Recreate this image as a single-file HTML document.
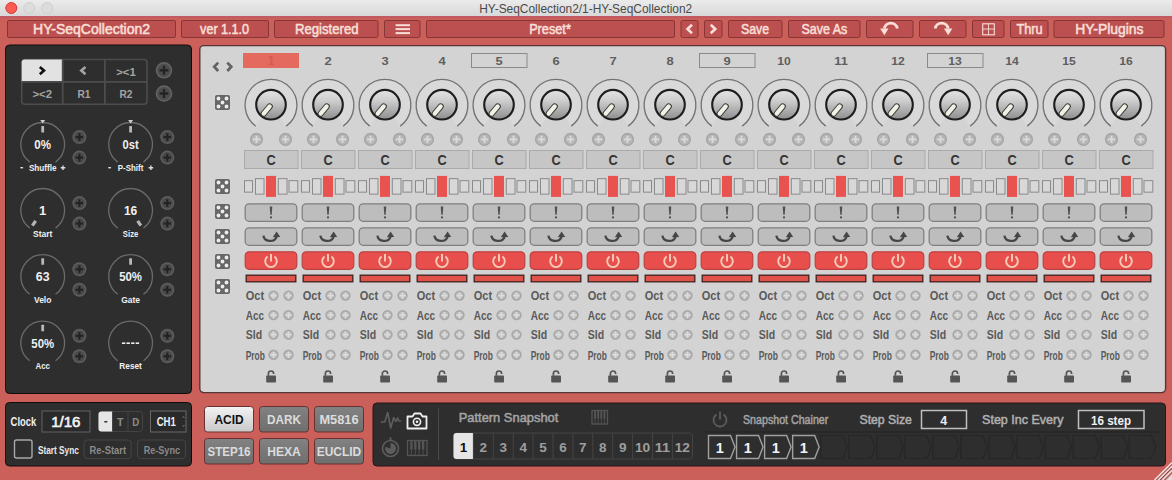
<!DOCTYPE html>
<html><head><meta charset="utf-8"><title>HY-SeqCollection2</title>
<style>html,body{margin:0;padding:0;width:1172px;height:480px;overflow:hidden;background:#cb5f5a;font-family:"Liberation Sans", sans-serif;}
svg text{font-family:"Liberation Sans", sans-serif;}</style></head>
<body><svg width="1172" height="480" viewBox="0 0 1172 480" style="display:block;font-family:"Liberation Sans", sans-serif"><defs>
<linearGradient id="tb" x1="0" y1="0" x2="0" y2="1"><stop offset="0" stop-color="#ebebeb"/><stop offset="1" stop-color="#d8d8d8"/></linearGradient>
<linearGradient id="kn" x1="0" y1="0" x2="0" y2="1"><stop offset="0" stop-color="#e4e4e4"/><stop offset="0.35" stop-color="#cfcfcf"/><stop offset="1" stop-color="#8e8e8e"/></linearGradient>
<linearGradient id="acid" x1="0" y1="0" x2="0" y2="1"><stop offset="0" stop-color="#f3f3f3"/><stop offset="1" stop-color="#c8c8c8"/></linearGradient>
<linearGradient id="gbtn" x1="0" y1="0" x2="0" y2="1"><stop offset="0" stop-color="#828282"/><stop offset="1" stop-color="#6e6e6e"/></linearGradient>
<g id="dice"><rect x="0" y="0" width="15" height="15" rx="2" fill="#676767"/>
<circle cx="3.5" cy="3.5" r="1.9" fill="#ececec"/><circle cx="11.5" cy="3.5" r="1.9" fill="#ececec"/><circle cx="7.5" cy="7.5" r="1.9" fill="#ececec"/><circle cx="3.5" cy="11.5" r="1.9" fill="#ececec"/><circle cx="11.5" cy="11.5" r="1.9" fill="#ececec"/></g>
<g id="plusL"><circle cx="0" cy="0" r="5.9" fill="#b6b6b6" stroke="#a4a4a4" stroke-width="1.3"/><rect x="-3.6" y="-0.95" width="7.2" height="1.9" fill="#dadada"/><rect x="-0.95" y="-3.6" width="1.9" height="7.2" fill="#dadada"/></g>
<g id="plusS"><circle cx="0" cy="0" r="4.3" fill="#bfbfbf" stroke="#a8a8a8" stroke-width="1.8"/><rect x="-3.2" y="-0.85" width="6.4" height="1.7" fill="#dcdcdc"/><rect x="-0.85" y="-3.2" width="1.7" height="6.4" fill="#dcdcdc"/></g>
<g id="plusD"><circle cx="0" cy="0" r="8.3" fill="#626262"/><circle cx="0" cy="0" r="6.6" fill="#4c4c4c"/><rect x="-4.4" y="-1.15" width="8.8" height="2.3" fill="#232323"/><rect x="-1.15" y="-4.4" width="2.3" height="8.8" fill="#232323"/></g>
<g id="plusD2"><circle cx="0" cy="0" r="7" fill="#5e5e5e"/><circle cx="0" cy="0" r="5.5" fill="#4a4a4a"/><rect x="-3.8" y="-1.05" width="7.6" height="2.1" fill="#232323"/><rect x="-1.05" y="-3.8" width="2.1" height="7.6" fill="#232323"/></g>
</defs>
<rect x="0.00" y="0.00" width="1172.00" height="16.00" rx="0" fill="url(#tb)" stroke="none" stroke-width="1" />
<circle cx="11.30" cy="8.00" r="5.5" fill="#fd5a50" stroke="#c9403a" stroke-width="1" />
<circle cx="29.30" cy="8.00" r="5.5" fill="#dcdcdc" stroke="#cdcdcd" stroke-width="0.9" />
<circle cx="47.20" cy="8.00" r="5.5" fill="#dcdcdc" stroke="#cdcdcd" stroke-width="0.9" />
<text x="585.75" y="12.60" font-size="12.5" fill="#4a4a4a" font-weight="normal" text-anchor="middle" textLength="213" lengthAdjust="spacingAndGlyphs" >HY-SeqCollection2/1-HY-SeqCollection2</text>
<rect x="0.00" y="16.00" width="1172.00" height="464.00" rx="0" fill="#cb5f5a" stroke="none" stroke-width="1" />
<rect x="0.00" y="16.00" width="1172.00" height="2.00" rx="0" fill="#c25a64" stroke="none" stroke-width="1" />
<rect x="7.50" y="20.50" width="168.00" height="17.00" rx="1.5" fill="#bc5051" stroke="#883535" stroke-width="1" />
<text x="91.60" y="34.00" font-size="14" fill="#f8ded6" font-weight="normal" text-anchor="middle" textLength="117" lengthAdjust="spacingAndGlyphs" stroke="#f8ded6" stroke-width="0.55">HY-SeqCollection2</text>
<rect x="181.50" y="20.50" width="87.00" height="17.00" rx="1.5" fill="#bc5051" stroke="#883535" stroke-width="1" />
<text x="224.60" y="34.00" font-size="14" fill="#f8ded6" font-weight="normal" text-anchor="middle" textLength="49" lengthAdjust="spacingAndGlyphs" stroke="#f8ded6" stroke-width="0.55">ver 1.1.0</text>
<rect x="274.50" y="20.50" width="103.50" height="17.00" rx="1.5" fill="#bc5051" stroke="#883535" stroke-width="1" />
<text x="326.75" y="34.00" font-size="14" fill="#f8ded6" font-weight="normal" text-anchor="middle" textLength="63.5" lengthAdjust="spacingAndGlyphs" stroke="#f8ded6" stroke-width="0.55">Registered</text>
<rect x="384.50" y="20.50" width="35.50" height="17.00" rx="1.5" fill="#bc5051" stroke="#883535" stroke-width="1" />
<rect x="395.60" y="24.20" width="14.40" height="2.00" rx="0" fill="#f8ded6" stroke="none" stroke-width="1" />
<rect x="395.60" y="28.10" width="14.40" height="2.00" rx="0" fill="#f8ded6" stroke="none" stroke-width="1" />
<rect x="395.60" y="32.10" width="14.40" height="2.00" rx="0" fill="#f8ded6" stroke="none" stroke-width="1" />
<rect x="426.50" y="20.50" width="248.00" height="17.00" rx="1.5" fill="#bc5051" stroke="#883535" stroke-width="1" />
<text x="550.00" y="34.00" font-size="14" fill="#f8ded6" font-weight="normal" text-anchor="middle" textLength="41.75" lengthAdjust="spacingAndGlyphs" stroke="#f8ded6" stroke-width="0.55">Preset*</text>
<rect x="681.00" y="20.50" width="17.00" height="17.00" rx="1.5" fill="#bc5051" stroke="#883535" stroke-width="1" />
<path d="M692.0,24.8 L687.5,29 L692.0,33.2" fill="none" stroke="#f8ded6" stroke-width="2.6"/>
<rect x="704.50" y="20.50" width="17.50" height="17.00" rx="1.5" fill="#bc5051" stroke="#883535" stroke-width="1" />
<path d="M710.75,24.8 L715.25,29 L710.75,33.2" fill="none" stroke="#f8ded6" stroke-width="2.6"/>
<rect x="728.50" y="20.50" width="53.50" height="17.00" rx="1.5" fill="#bc5051" stroke="#883535" stroke-width="1" />
<text x="755.00" y="34.00" font-size="14" fill="#f8ded6" font-weight="normal" text-anchor="middle" textLength="28" lengthAdjust="spacingAndGlyphs" stroke="#f8ded6" stroke-width="0.55">Save</text>
<rect x="788.50" y="20.50" width="71.50" height="17.00" rx="1.5" fill="#bc5051" stroke="#883535" stroke-width="1" />
<text x="824.40" y="34.00" font-size="14" fill="#f8ded6" font-weight="normal" text-anchor="middle" textLength="45.75" lengthAdjust="spacingAndGlyphs" stroke="#f8ded6" stroke-width="0.55">Save As</text>
<rect x="866.50" y="20.50" width="46.50" height="17.00" rx="1.5" fill="#bc5051" stroke="#883535" stroke-width="1" />
<path d="M897.35,28.6 A6.6,6.6 0 0 0 884.35,28.6" fill="none" stroke="#f8ded6" stroke-width="2.8"/>
<path d="M880.15,28.4 L888.55,28.4 L884.35,35.3 Z" fill="#f8ded6"/>
<rect x="919.50" y="20.50" width="46.50" height="17.00" rx="1.5" fill="#bc5051" stroke="#883535" stroke-width="1" />
<path d="M935.15,28.6 A6.6,6.6 0 0 1 948.15,28.6" fill="none" stroke="#f8ded6" stroke-width="2.8"/>
<path d="M952.35,28.4 L943.95,28.4 L948.15,35.3 Z" fill="#f8ded6"/>
<rect x="972.50" y="20.50" width="31.50" height="17.00" rx="1.5" fill="#bc5051" stroke="#883535" stroke-width="1" />
<rect x="982.70" y="23.80" width="11.60" height="11.00" rx="0" fill="none" stroke="#f8ded6" stroke-width="1.1" />
<line x1="988.5" y1="23.8" x2="988.5" y2="34.8" stroke="#f8ded6" stroke-width="0.9"/>
<line x1="982.7" y1="29" x2="994.3" y2="29" stroke="#f8ded6" stroke-width="0.9"/>
<rect x="1010.50" y="20.50" width="37.50" height="17.00" rx="1.5" fill="#bc5051" stroke="#883535" stroke-width="1" />
<text x="1029.60" y="34.00" font-size="14" fill="#f8ded6" font-weight="normal" text-anchor="middle" textLength="26.25" lengthAdjust="spacingAndGlyphs" stroke="#f8ded6" stroke-width="0.55">Thru</text>
<rect x="1054.00" y="20.50" width="110.00" height="17.00" rx="1.5" fill="#bc5051" stroke="#883535" stroke-width="1" />
<text x="1109.40" y="34.00" font-size="14" fill="#f8ded6" font-weight="normal" text-anchor="middle" textLength="68.25" lengthAdjust="spacingAndGlyphs" stroke="#f8ded6" stroke-width="0.55">HY-Plugins</text>
<rect x="5.50" y="45.00" width="186.00" height="348.50" rx="4" fill="#2e2e2e" stroke="#140c0c" stroke-width="1" />
<rect x="21.70" y="59.50" width="125.30" height="44.70" rx="3" fill="#2e2e2e" stroke="#4c4c4c" stroke-width="1.6" />
<path d="M24.7,59.5 H62.7 V81.8 H21.7 V62.5 A3,3 0 0 1 24.7,59.5 Z" fill="#e2e2e2"/>
<line x1="62.7" y1="59.5" x2="62.7" y2="104.2" stroke="#4c4c4c" stroke-width="1.8"/>
<line x1="104.9" y1="59.5" x2="104.9" y2="104.2" stroke="#4c4c4c" stroke-width="1.8"/>
<line x1="21.7" y1="81.8" x2="147" y2="81.8" stroke="#4c4c4c" stroke-width="1.8"/>
<path d="M39.8,67 L44,70.6 L39.8,74.2" fill="none" stroke="#111" stroke-width="2.6"/>
<path d="M85.5,67 L81.3,70.6 L85.5,74.2" fill="none" stroke="#a4a4a4" stroke-width="2.6"/>
<text x="126.00" y="75.60" font-size="11" fill="#a4a4a4" font-weight="bold" text-anchor="middle" textLength="19.5" lengthAdjust="spacingAndGlyphs" >&gt;&lt;1</text>
<text x="42.20" y="98.00" font-size="11" fill="#a4a4a4" font-weight="bold" text-anchor="middle" textLength="19.5" lengthAdjust="spacingAndGlyphs" >&gt;&lt;2</text>
<text x="84.00" y="98.00" font-size="11" fill="#a4a4a4" font-weight="bold" text-anchor="middle" textLength="13" lengthAdjust="spacingAndGlyphs" >R1</text>
<text x="126.00" y="98.00" font-size="11" fill="#a4a4a4" font-weight="bold" text-anchor="middle" textLength="13" lengthAdjust="spacingAndGlyphs" >R2</text>
<use href="#plusD" x="164" y="70.3"/>
<use href="#plusD" x="164" y="93.5"/>
<path d="M29.83,162.12 A21.9,21.9 0 1 1 55.57,162.12" fill="none" stroke="#6a6a6a" stroke-width="1.3"/>
<rect x="41.30" y="126.00" width="2.80" height="6.50" rx="0.5" fill="#b8b8b8" stroke="none" stroke-width="1" />
<path d="M40.2,119.9 L45.2,119.9 L42.7,123.4 Z" fill="#cfcfcf"/>
<text x="42.70" y="149.00" font-size="12.6" fill="#f0f0f0" font-weight="bold" text-anchor="middle" textLength="16.7" lengthAdjust="spacingAndGlyphs" >0%</text>
<text x="42.70" y="170.80" font-size="9.2" fill="#f0f0f0" font-weight="bold" text-anchor="middle" textLength="27.6" lengthAdjust="spacingAndGlyphs" >Shuffle</text>
<rect x="20.40" y="167.00" width="2.70" height="1.40" rx="0" fill="#dddddd" stroke="none" stroke-width="1" />
<path d="M60.7,167.70000000000002 h4.6 M63.0,165.4 v4.6" stroke="#dddddd" stroke-width="1.4"/>
<use href="#plusD2" x="79.4" y="137.1"/>
<use href="#plusD2" x="79.4" y="157.6"/>
<path d="M117.73,162.12 A21.9,21.9 0 1 1 143.47,162.12" fill="none" stroke="#6a6a6a" stroke-width="1.3"/>
<rect x="129.20" y="126.00" width="2.80" height="6.50" rx="0.5" fill="#b8b8b8" stroke="none" stroke-width="1" />
<path d="M128.1,119.9 L133.1,119.9 L130.6,123.4 Z" fill="#cfcfcf"/>
<text x="130.60" y="149.00" font-size="12.6" fill="#f0f0f0" font-weight="bold" text-anchor="middle" textLength="16.1" lengthAdjust="spacingAndGlyphs" >0st</text>
<text x="130.60" y="170.80" font-size="9.2" fill="#f0f0f0" font-weight="bold" text-anchor="middle" textLength="25.5" lengthAdjust="spacingAndGlyphs" >P-Shift</text>
<rect x="108.30" y="167.00" width="2.70" height="1.40" rx="0" fill="#dddddd" stroke="none" stroke-width="1" />
<path d="M148.6,167.70000000000002 h4.6 M150.9,165.4 v4.6" stroke="#dddddd" stroke-width="1.4"/>
<use href="#plusD2" x="167.3" y="137.1"/>
<use href="#plusD2" x="167.3" y="157.6"/>
<path d="M29.83,228.12 A21.9,21.9 0 1 1 55.57,228.12" fill="none" stroke="#6a6a6a" stroke-width="1.3"/>
<line x1="35.65" y1="220.85" x2="32.41" y2="225.65" stroke="#b4b4b4" stroke-width="3.2"/>
<text x="42.70" y="215.00" font-size="12.6" fill="#f0f0f0" font-weight="bold" text-anchor="middle" textLength="7.3" lengthAdjust="spacingAndGlyphs" >1</text>
<text x="42.70" y="236.80" font-size="9.2" fill="#f0f0f0" font-weight="bold" text-anchor="middle" textLength="19.3" lengthAdjust="spacingAndGlyphs" >Start</text>
<use href="#plusD2" x="79.4" y="203.1"/>
<use href="#plusD2" x="79.4" y="223.6"/>
<path d="M117.73,228.12 A21.9,21.9 0 1 1 143.47,228.12" fill="none" stroke="#6a6a6a" stroke-width="1.3"/>
<line x1="137.65" y1="220.85" x2="140.89" y2="225.65" stroke="#b4b4b4" stroke-width="3.2"/>
<text x="130.60" y="215.00" font-size="12.6" fill="#f0f0f0" font-weight="bold" text-anchor="middle" textLength="13.4" lengthAdjust="spacingAndGlyphs" >16</text>
<text x="130.60" y="236.80" font-size="9.2" fill="#f0f0f0" font-weight="bold" text-anchor="middle" textLength="15.5" lengthAdjust="spacingAndGlyphs" >Size</text>
<use href="#plusD2" x="167.3" y="203.1"/>
<use href="#plusD2" x="167.3" y="223.6"/>
<path d="M29.83,294.32 A21.9,21.9 0 1 1 55.57,294.32" fill="none" stroke="#6a6a6a" stroke-width="1.3"/>
<rect x="41.30" y="258.20" width="2.80" height="6.50" rx="0.5" fill="#b8b8b8" stroke="none" stroke-width="1" />
<text x="42.70" y="281.20" font-size="12.6" fill="#f0f0f0" font-weight="bold" text-anchor="middle" textLength="13.75" lengthAdjust="spacingAndGlyphs" >63</text>
<text x="42.70" y="303.00" font-size="9.2" fill="#f0f0f0" font-weight="bold" text-anchor="middle" textLength="17.5" lengthAdjust="spacingAndGlyphs" >Velo</text>
<use href="#plusD2" x="79.4" y="269.3"/>
<use href="#plusD2" x="79.4" y="289.8"/>
<path d="M117.73,294.32 A21.9,21.9 0 1 1 143.47,294.32" fill="none" stroke="#6a6a6a" stroke-width="1.3"/>
<rect x="129.20" y="258.20" width="2.80" height="6.50" rx="0.5" fill="#b8b8b8" stroke="none" stroke-width="1" />
<text x="130.60" y="281.20" font-size="12.6" fill="#f0f0f0" font-weight="bold" text-anchor="middle" textLength="22.8" lengthAdjust="spacingAndGlyphs" >50%</text>
<text x="130.60" y="303.00" font-size="9.2" fill="#f0f0f0" font-weight="bold" text-anchor="middle" textLength="18.75" lengthAdjust="spacingAndGlyphs" >Gate</text>
<use href="#plusD2" x="167.3" y="269.3"/>
<use href="#plusD2" x="167.3" y="289.8"/>
<path d="M29.83,360.82 A21.9,21.9 0 1 1 55.57,360.82" fill="none" stroke="#6a6a6a" stroke-width="1.3"/>
<rect x="41.30" y="324.70" width="2.80" height="6.50" rx="0.5" fill="#b8b8b8" stroke="none" stroke-width="1" />
<text x="42.70" y="347.70" font-size="12.6" fill="#f0f0f0" font-weight="bold" text-anchor="middle" textLength="22.8" lengthAdjust="spacingAndGlyphs" >50%</text>
<text x="42.70" y="368.80" font-size="9.2" fill="#f0f0f0" font-weight="bold" text-anchor="middle" textLength="14.5" lengthAdjust="spacingAndGlyphs" >Acc</text>
<use href="#plusD2" x="79.4" y="335.8"/>
<use href="#plusD2" x="79.4" y="356.3"/>
<path d="M117.73,360.82 A21.9,21.9 0 1 1 143.47,360.82" fill="none" stroke="#6a6a6a" stroke-width="1.3"/>
<rect x="121.90" y="342.40" width="3.40" height="1.60" rx="0" fill="#eeeeee" stroke="none" stroke-width="1" />
<rect x="126.50" y="342.40" width="3.40" height="1.60" rx="0" fill="#eeeeee" stroke="none" stroke-width="1" />
<rect x="131.10" y="342.40" width="3.40" height="1.60" rx="0" fill="#eeeeee" stroke="none" stroke-width="1" />
<rect x="135.70" y="342.40" width="3.40" height="1.60" rx="0" fill="#eeeeee" stroke="none" stroke-width="1" />
<text x="130.60" y="368.80" font-size="9.2" fill="#f0f0f0" font-weight="bold" text-anchor="middle" textLength="22.5" lengthAdjust="spacingAndGlyphs" >Reset</text>
<use href="#plusD2" x="167.3" y="335.8"/>
<use href="#plusD2" x="167.3" y="356.3"/>
<rect x="199.80" y="45.60" width="965.80" height="347.00" rx="4" fill="#d3d3d3" stroke="#583434" stroke-width="1.4" />
<path d="M218.2,62.6 L214.2,66.8 L218.2,71" fill="none" stroke="#636363" stroke-width="2.7"/>
<path d="M227.3,62.6 L231.3,66.8 L227.3,71" fill="none" stroke="#636363" stroke-width="2.7"/>
<use href="#dice" x="215" y="95"/>
<use href="#dice" x="215" y="179"/>
<use href="#dice" x="215" y="204"/>
<use href="#dice" x="215" y="229"/>
<use href="#dice" x="215" y="254"/>
<use href="#dice" x="215" y="279"/>
<rect x="243.00" y="53.00" width="56.00" height="15.00" rx="0" fill="#e4695e" stroke="none" stroke-width="1" />
<text x="271.00" y="65.40" font-size="12" fill="#d65a50" font-weight="bold" text-anchor="middle" >1</text>
<path d="M271,105.2 L256.13,125.67 A25.3,25.3 0 1 1 285.87,125.67 Z" fill="#d9d9d9"/>
<path d="M255.78,126.15 A25.9,25.9 0 1 1 286.22,126.15" fill="none" stroke="#727272" stroke-width="1.3"/>
<circle cx="271.00" cy="104.70" r="14.8" fill="url(#kn)" stroke="#1e1e1e" stroke-width="2.1" />
<line x1="269.71" y1="106.43" x2="263.67" y2="113.63" stroke="#3a3a3a" stroke-width="6.2" stroke-linecap="round"/>
<line x1="269.71" y1="106.43" x2="263.67" y2="113.63" stroke="#f0f0e4" stroke-width="4.2" stroke-linecap="round"/>
<use href="#plusL" x="256.5" y="139.4"/>
<use href="#plusL" x="285.5" y="139.4"/>
<rect x="244.50" y="150.50" width="53.50" height="18.00" rx="0" fill="#c6c6c6" stroke="#aaaaaa" stroke-width="1" />
<text x="271.00" y="164.60" font-size="15.5" fill="#333333" font-weight="bold" text-anchor="middle" textLength="9.2" lengthAdjust="spacingAndGlyphs" >C</text>
<rect x="244.50" y="180.65" width="8.00" height="11.50" rx="0" fill="#d8d8d8" stroke="#8a8a8a" stroke-width="1" />
<rect x="255.50" y="178.65" width="8.50" height="15.50" rx="0" fill="#d8d8d8" stroke="#8a8a8a" stroke-width="1" />
<rect x="266.00" y="175.90" width="10.00" height="21.00" rx="0" fill="#e8524f" stroke="none" stroke-width="1" />
<rect x="278.30" y="178.65" width="8.70" height="15.50" rx="0" fill="#d8d8d8" stroke="#8a8a8a" stroke-width="1" />
<rect x="289.00" y="180.65" width="8.80" height="11.50" rx="0" fill="#d8d8d8" stroke="#8a8a8a" stroke-width="1" />
<rect x="245.20" y="203.80" width="51.60" height="17.50" rx="4" fill="#bdbdbd" stroke="#808080" stroke-width="1.3" />
<path d="M269.7,206.4 H272.3 L271.7,214.8 H270.3 Z" fill="#505050"/>
<circle cx="271.00" cy="217.40" r="1.1" fill="#505050" stroke="none" stroke-width="1" />
<rect x="245.20" y="227.80" width="51.60" height="17.50" rx="4" fill="#bdbdbd" stroke="#808080" stroke-width="1.3" />
<path d="M263.4,235.6 A6.8,6 0 0 0 276.6,236.8" fill="none" stroke="#464646" stroke-width="2.3"/>
<path d="M272.8,237.2 L276.6,231.6 L280.2,237 Z" fill="#464646"/>
<rect x="245.20" y="251.80" width="51.60" height="17.50" rx="4" fill="#e84e4b" stroke="#bb4242" stroke-width="1.2" />
<path d="M267.6,256.6 A5.8,5.8 0 1 0 274.4,256.6" fill="none" stroke="#f6cdb8" stroke-width="1.9"/>
<line x1="271" y1="253.9" x2="271" y2="261.6" stroke="#f6cdb8" stroke-width="1.9"/>
<rect x="246.20" y="275.20" width="49.60" height="6.60" rx="0" fill="#e0524a" stroke="#3e2020" stroke-width="1.3" />
<text x="245.70" y="300.30" font-size="12.2" fill="#5a5a5a" font-weight="bold" text-anchor="start" textLength="18.4" lengthAdjust="spacingAndGlyphs" >Oct</text>
<use href="#plusS" x="273.5" y="295.6"/>
<use href="#plusS" x="288.5" y="295.6"/>
<text x="245.70" y="319.80" font-size="12.2" fill="#5a5a5a" font-weight="bold" text-anchor="start" textLength="18.4" lengthAdjust="spacingAndGlyphs" >Acc</text>
<use href="#plusS" x="273.5" y="315.1"/>
<use href="#plusS" x="288.5" y="315.1"/>
<text x="245.70" y="339.30" font-size="12.2" fill="#5a5a5a" font-weight="bold" text-anchor="start" textLength="16.4" lengthAdjust="spacingAndGlyphs" >Sld</text>
<use href="#plusS" x="273.5" y="334.6"/>
<use href="#plusS" x="288.5" y="334.6"/>
<text x="245.70" y="359.50" font-size="12.2" fill="#5a5a5a" font-weight="bold" text-anchor="start" textLength="19.2" lengthAdjust="spacingAndGlyphs" >Prob</text>
<use href="#plusS" x="273.5" y="354.8"/>
<use href="#plusS" x="288.5" y="354.8"/>
<path d="M268.4,375.8 v-2.2 a2.6,2.6 0 0 1 5.2,0 v0.3" fill="none" stroke="#555555" stroke-width="1.7"/>
<rect x="266.20" y="375.50" width="9.80" height="7.00" rx="0.8" fill="#555555" stroke="none" stroke-width="1" />
<text x="328.00" y="65.40" font-size="11.5" fill="#5e5e5e" font-weight="bold" text-anchor="middle" textLength="7.2" lengthAdjust="spacingAndGlyphs" >2</text>
<path d="M328,105.2 L313.13,125.67 A25.3,25.3 0 1 1 342.87,125.67 Z" fill="#d9d9d9"/>
<path d="M312.78,126.15 A25.9,25.9 0 1 1 343.22,126.15" fill="none" stroke="#727272" stroke-width="1.3"/>
<circle cx="328.00" cy="104.70" r="14.8" fill="url(#kn)" stroke="#1e1e1e" stroke-width="2.1" />
<line x1="326.71" y1="106.43" x2="320.67" y2="113.63" stroke="#3a3a3a" stroke-width="6.2" stroke-linecap="round"/>
<line x1="326.71" y1="106.43" x2="320.67" y2="113.63" stroke="#f0f0e4" stroke-width="4.2" stroke-linecap="round"/>
<use href="#plusL" x="313.5" y="139.4"/>
<use href="#plusL" x="342.5" y="139.4"/>
<rect x="301.50" y="150.50" width="53.50" height="18.00" rx="0" fill="#c6c6c6" stroke="#aaaaaa" stroke-width="1" />
<text x="328.00" y="164.60" font-size="15.5" fill="#333333" font-weight="bold" text-anchor="middle" textLength="9.2" lengthAdjust="spacingAndGlyphs" >C</text>
<rect x="301.50" y="180.65" width="8.00" height="11.50" rx="0" fill="#d8d8d8" stroke="#8a8a8a" stroke-width="1" />
<rect x="312.50" y="178.65" width="8.50" height="15.50" rx="0" fill="#d8d8d8" stroke="#8a8a8a" stroke-width="1" />
<rect x="323.00" y="175.90" width="10.00" height="21.00" rx="0" fill="#e8524f" stroke="none" stroke-width="1" />
<rect x="335.30" y="178.65" width="8.70" height="15.50" rx="0" fill="#d8d8d8" stroke="#8a8a8a" stroke-width="1" />
<rect x="346.00" y="180.65" width="8.80" height="11.50" rx="0" fill="#d8d8d8" stroke="#8a8a8a" stroke-width="1" />
<rect x="302.20" y="203.80" width="51.60" height="17.50" rx="4" fill="#bdbdbd" stroke="#808080" stroke-width="1.3" />
<path d="M326.7,206.4 H329.3 L328.7,214.8 H327.3 Z" fill="#505050"/>
<circle cx="328.00" cy="217.40" r="1.1" fill="#505050" stroke="none" stroke-width="1" />
<rect x="302.20" y="227.80" width="51.60" height="17.50" rx="4" fill="#bdbdbd" stroke="#808080" stroke-width="1.3" />
<path d="M320.4,235.6 A6.8,6 0 0 0 333.6,236.8" fill="none" stroke="#464646" stroke-width="2.3"/>
<path d="M329.8,237.2 L333.6,231.6 L337.2,237 Z" fill="#464646"/>
<rect x="302.20" y="251.80" width="51.60" height="17.50" rx="4" fill="#e84e4b" stroke="#bb4242" stroke-width="1.2" />
<path d="M324.6,256.6 A5.8,5.8 0 1 0 331.4,256.6" fill="none" stroke="#f6cdb8" stroke-width="1.9"/>
<line x1="328" y1="253.9" x2="328" y2="261.6" stroke="#f6cdb8" stroke-width="1.9"/>
<rect x="303.20" y="275.20" width="49.60" height="6.60" rx="0" fill="#e0524a" stroke="#3e2020" stroke-width="1.3" />
<text x="302.70" y="300.30" font-size="12.2" fill="#5a5a5a" font-weight="bold" text-anchor="start" textLength="18.4" lengthAdjust="spacingAndGlyphs" >Oct</text>
<use href="#plusS" x="330.5" y="295.6"/>
<use href="#plusS" x="345.5" y="295.6"/>
<text x="302.70" y="319.80" font-size="12.2" fill="#5a5a5a" font-weight="bold" text-anchor="start" textLength="18.4" lengthAdjust="spacingAndGlyphs" >Acc</text>
<use href="#plusS" x="330.5" y="315.1"/>
<use href="#plusS" x="345.5" y="315.1"/>
<text x="302.70" y="339.30" font-size="12.2" fill="#5a5a5a" font-weight="bold" text-anchor="start" textLength="16.4" lengthAdjust="spacingAndGlyphs" >Sld</text>
<use href="#plusS" x="330.5" y="334.6"/>
<use href="#plusS" x="345.5" y="334.6"/>
<text x="302.70" y="359.50" font-size="12.2" fill="#5a5a5a" font-weight="bold" text-anchor="start" textLength="19.2" lengthAdjust="spacingAndGlyphs" >Prob</text>
<use href="#plusS" x="330.5" y="354.8"/>
<use href="#plusS" x="345.5" y="354.8"/>
<path d="M325.4,375.8 v-2.2 a2.6,2.6 0 0 1 5.2,0 v0.3" fill="none" stroke="#555555" stroke-width="1.7"/>
<rect x="323.20" y="375.50" width="9.80" height="7.00" rx="0.8" fill="#555555" stroke="none" stroke-width="1" />
<text x="385.00" y="65.40" font-size="11.5" fill="#5e5e5e" font-weight="bold" text-anchor="middle" textLength="7.2" lengthAdjust="spacingAndGlyphs" >3</text>
<path d="M385,105.2 L370.13,125.67 A25.3,25.3 0 1 1 399.87,125.67 Z" fill="#d9d9d9"/>
<path d="M369.78,126.15 A25.9,25.9 0 1 1 400.22,126.15" fill="none" stroke="#727272" stroke-width="1.3"/>
<circle cx="385.00" cy="104.70" r="14.8" fill="url(#kn)" stroke="#1e1e1e" stroke-width="2.1" />
<line x1="383.71" y1="106.43" x2="377.67" y2="113.63" stroke="#3a3a3a" stroke-width="6.2" stroke-linecap="round"/>
<line x1="383.71" y1="106.43" x2="377.67" y2="113.63" stroke="#f0f0e4" stroke-width="4.2" stroke-linecap="round"/>
<use href="#plusL" x="370.5" y="139.4"/>
<use href="#plusL" x="399.5" y="139.4"/>
<rect x="358.50" y="150.50" width="53.50" height="18.00" rx="0" fill="#c6c6c6" stroke="#aaaaaa" stroke-width="1" />
<text x="385.00" y="164.60" font-size="15.5" fill="#333333" font-weight="bold" text-anchor="middle" textLength="9.2" lengthAdjust="spacingAndGlyphs" >C</text>
<rect x="358.50" y="180.65" width="8.00" height="11.50" rx="0" fill="#d8d8d8" stroke="#8a8a8a" stroke-width="1" />
<rect x="369.50" y="178.65" width="8.50" height="15.50" rx="0" fill="#d8d8d8" stroke="#8a8a8a" stroke-width="1" />
<rect x="380.00" y="175.90" width="10.00" height="21.00" rx="0" fill="#e8524f" stroke="none" stroke-width="1" />
<rect x="392.30" y="178.65" width="8.70" height="15.50" rx="0" fill="#d8d8d8" stroke="#8a8a8a" stroke-width="1" />
<rect x="403.00" y="180.65" width="8.80" height="11.50" rx="0" fill="#d8d8d8" stroke="#8a8a8a" stroke-width="1" />
<rect x="359.20" y="203.80" width="51.60" height="17.50" rx="4" fill="#bdbdbd" stroke="#808080" stroke-width="1.3" />
<path d="M383.7,206.4 H386.3 L385.7,214.8 H384.3 Z" fill="#505050"/>
<circle cx="385.00" cy="217.40" r="1.1" fill="#505050" stroke="none" stroke-width="1" />
<rect x="359.20" y="227.80" width="51.60" height="17.50" rx="4" fill="#bdbdbd" stroke="#808080" stroke-width="1.3" />
<path d="M377.4,235.6 A6.8,6 0 0 0 390.6,236.8" fill="none" stroke="#464646" stroke-width="2.3"/>
<path d="M386.8,237.2 L390.6,231.6 L394.2,237 Z" fill="#464646"/>
<rect x="359.20" y="251.80" width="51.60" height="17.50" rx="4" fill="#e84e4b" stroke="#bb4242" stroke-width="1.2" />
<path d="M381.6,256.6 A5.8,5.8 0 1 0 388.4,256.6" fill="none" stroke="#f6cdb8" stroke-width="1.9"/>
<line x1="385" y1="253.9" x2="385" y2="261.6" stroke="#f6cdb8" stroke-width="1.9"/>
<rect x="360.20" y="275.20" width="49.60" height="6.60" rx="0" fill="#e0524a" stroke="#3e2020" stroke-width="1.3" />
<text x="359.70" y="300.30" font-size="12.2" fill="#5a5a5a" font-weight="bold" text-anchor="start" textLength="18.4" lengthAdjust="spacingAndGlyphs" >Oct</text>
<use href="#plusS" x="387.5" y="295.6"/>
<use href="#plusS" x="402.5" y="295.6"/>
<text x="359.70" y="319.80" font-size="12.2" fill="#5a5a5a" font-weight="bold" text-anchor="start" textLength="18.4" lengthAdjust="spacingAndGlyphs" >Acc</text>
<use href="#plusS" x="387.5" y="315.1"/>
<use href="#plusS" x="402.5" y="315.1"/>
<text x="359.70" y="339.30" font-size="12.2" fill="#5a5a5a" font-weight="bold" text-anchor="start" textLength="16.4" lengthAdjust="spacingAndGlyphs" >Sld</text>
<use href="#plusS" x="387.5" y="334.6"/>
<use href="#plusS" x="402.5" y="334.6"/>
<text x="359.70" y="359.50" font-size="12.2" fill="#5a5a5a" font-weight="bold" text-anchor="start" textLength="19.2" lengthAdjust="spacingAndGlyphs" >Prob</text>
<use href="#plusS" x="387.5" y="354.8"/>
<use href="#plusS" x="402.5" y="354.8"/>
<path d="M382.4,375.8 v-2.2 a2.6,2.6 0 0 1 5.2,0 v0.3" fill="none" stroke="#555555" stroke-width="1.7"/>
<rect x="380.20" y="375.50" width="9.80" height="7.00" rx="0.8" fill="#555555" stroke="none" stroke-width="1" />
<text x="442.00" y="65.40" font-size="11.5" fill="#5e5e5e" font-weight="bold" text-anchor="middle" textLength="7.2" lengthAdjust="spacingAndGlyphs" >4</text>
<path d="M442,105.2 L427.13,125.67 A25.3,25.3 0 1 1 456.87,125.67 Z" fill="#d9d9d9"/>
<path d="M426.78,126.15 A25.9,25.9 0 1 1 457.22,126.15" fill="none" stroke="#727272" stroke-width="1.3"/>
<circle cx="442.00" cy="104.70" r="14.8" fill="url(#kn)" stroke="#1e1e1e" stroke-width="2.1" />
<line x1="440.71" y1="106.43" x2="434.67" y2="113.63" stroke="#3a3a3a" stroke-width="6.2" stroke-linecap="round"/>
<line x1="440.71" y1="106.43" x2="434.67" y2="113.63" stroke="#f0f0e4" stroke-width="4.2" stroke-linecap="round"/>
<use href="#plusL" x="427.5" y="139.4"/>
<use href="#plusL" x="456.5" y="139.4"/>
<rect x="415.50" y="150.50" width="53.50" height="18.00" rx="0" fill="#c6c6c6" stroke="#aaaaaa" stroke-width="1" />
<text x="442.00" y="164.60" font-size="15.5" fill="#333333" font-weight="bold" text-anchor="middle" textLength="9.2" lengthAdjust="spacingAndGlyphs" >C</text>
<rect x="415.50" y="180.65" width="8.00" height="11.50" rx="0" fill="#d8d8d8" stroke="#8a8a8a" stroke-width="1" />
<rect x="426.50" y="178.65" width="8.50" height="15.50" rx="0" fill="#d8d8d8" stroke="#8a8a8a" stroke-width="1" />
<rect x="437.00" y="175.90" width="10.00" height="21.00" rx="0" fill="#e8524f" stroke="none" stroke-width="1" />
<rect x="449.30" y="178.65" width="8.70" height="15.50" rx="0" fill="#d8d8d8" stroke="#8a8a8a" stroke-width="1" />
<rect x="460.00" y="180.65" width="8.80" height="11.50" rx="0" fill="#d8d8d8" stroke="#8a8a8a" stroke-width="1" />
<rect x="416.20" y="203.80" width="51.60" height="17.50" rx="4" fill="#bdbdbd" stroke="#808080" stroke-width="1.3" />
<path d="M440.7,206.4 H443.3 L442.7,214.8 H441.3 Z" fill="#505050"/>
<circle cx="442.00" cy="217.40" r="1.1" fill="#505050" stroke="none" stroke-width="1" />
<rect x="416.20" y="227.80" width="51.60" height="17.50" rx="4" fill="#bdbdbd" stroke="#808080" stroke-width="1.3" />
<path d="M434.4,235.6 A6.8,6 0 0 0 447.6,236.8" fill="none" stroke="#464646" stroke-width="2.3"/>
<path d="M443.8,237.2 L447.6,231.6 L451.2,237 Z" fill="#464646"/>
<rect x="416.20" y="251.80" width="51.60" height="17.50" rx="4" fill="#e84e4b" stroke="#bb4242" stroke-width="1.2" />
<path d="M438.6,256.6 A5.8,5.8 0 1 0 445.4,256.6" fill="none" stroke="#f6cdb8" stroke-width="1.9"/>
<line x1="442" y1="253.9" x2="442" y2="261.6" stroke="#f6cdb8" stroke-width="1.9"/>
<rect x="417.20" y="275.20" width="49.60" height="6.60" rx="0" fill="#e0524a" stroke="#3e2020" stroke-width="1.3" />
<text x="416.70" y="300.30" font-size="12.2" fill="#5a5a5a" font-weight="bold" text-anchor="start" textLength="18.4" lengthAdjust="spacingAndGlyphs" >Oct</text>
<use href="#plusS" x="444.5" y="295.6"/>
<use href="#plusS" x="459.5" y="295.6"/>
<text x="416.70" y="319.80" font-size="12.2" fill="#5a5a5a" font-weight="bold" text-anchor="start" textLength="18.4" lengthAdjust="spacingAndGlyphs" >Acc</text>
<use href="#plusS" x="444.5" y="315.1"/>
<use href="#plusS" x="459.5" y="315.1"/>
<text x="416.70" y="339.30" font-size="12.2" fill="#5a5a5a" font-weight="bold" text-anchor="start" textLength="16.4" lengthAdjust="spacingAndGlyphs" >Sld</text>
<use href="#plusS" x="444.5" y="334.6"/>
<use href="#plusS" x="459.5" y="334.6"/>
<text x="416.70" y="359.50" font-size="12.2" fill="#5a5a5a" font-weight="bold" text-anchor="start" textLength="19.2" lengthAdjust="spacingAndGlyphs" >Prob</text>
<use href="#plusS" x="444.5" y="354.8"/>
<use href="#plusS" x="459.5" y="354.8"/>
<path d="M439.4,375.8 v-2.2 a2.6,2.6 0 0 1 5.2,0 v0.3" fill="none" stroke="#555555" stroke-width="1.7"/>
<rect x="437.20" y="375.50" width="9.80" height="7.00" rx="0.8" fill="#555555" stroke="none" stroke-width="1" />
<rect x="471.50" y="53.50" width="55.50" height="14.00" rx="0" fill="none" stroke="#8a8a8a" stroke-width="1" />
<text x="499.00" y="65.40" font-size="11.5" fill="#5e5e5e" font-weight="bold" text-anchor="middle" textLength="7.2" lengthAdjust="spacingAndGlyphs" >5</text>
<path d="M499,105.2 L484.13,125.67 A25.3,25.3 0 1 1 513.87,125.67 Z" fill="#d9d9d9"/>
<path d="M483.78,126.15 A25.9,25.9 0 1 1 514.22,126.15" fill="none" stroke="#727272" stroke-width="1.3"/>
<circle cx="499.00" cy="104.70" r="14.8" fill="url(#kn)" stroke="#1e1e1e" stroke-width="2.1" />
<line x1="497.71" y1="106.43" x2="491.67" y2="113.63" stroke="#3a3a3a" stroke-width="6.2" stroke-linecap="round"/>
<line x1="497.71" y1="106.43" x2="491.67" y2="113.63" stroke="#f0f0e4" stroke-width="4.2" stroke-linecap="round"/>
<use href="#plusL" x="484.5" y="139.4"/>
<use href="#plusL" x="513.5" y="139.4"/>
<rect x="472.50" y="150.50" width="53.50" height="18.00" rx="0" fill="#c6c6c6" stroke="#aaaaaa" stroke-width="1" />
<text x="499.00" y="164.60" font-size="15.5" fill="#333333" font-weight="bold" text-anchor="middle" textLength="9.2" lengthAdjust="spacingAndGlyphs" >C</text>
<rect x="472.50" y="180.65" width="8.00" height="11.50" rx="0" fill="#d8d8d8" stroke="#8a8a8a" stroke-width="1" />
<rect x="483.50" y="178.65" width="8.50" height="15.50" rx="0" fill="#d8d8d8" stroke="#8a8a8a" stroke-width="1" />
<rect x="494.00" y="175.90" width="10.00" height="21.00" rx="0" fill="#e8524f" stroke="none" stroke-width="1" />
<rect x="506.30" y="178.65" width="8.70" height="15.50" rx="0" fill="#d8d8d8" stroke="#8a8a8a" stroke-width="1" />
<rect x="517.00" y="180.65" width="8.80" height="11.50" rx="0" fill="#d8d8d8" stroke="#8a8a8a" stroke-width="1" />
<rect x="473.20" y="203.80" width="51.60" height="17.50" rx="4" fill="#bdbdbd" stroke="#808080" stroke-width="1.3" />
<path d="M497.7,206.4 H500.3 L499.7,214.8 H498.3 Z" fill="#505050"/>
<circle cx="499.00" cy="217.40" r="1.1" fill="#505050" stroke="none" stroke-width="1" />
<rect x="473.20" y="227.80" width="51.60" height="17.50" rx="4" fill="#bdbdbd" stroke="#808080" stroke-width="1.3" />
<path d="M491.4,235.6 A6.8,6 0 0 0 504.6,236.8" fill="none" stroke="#464646" stroke-width="2.3"/>
<path d="M500.8,237.2 L504.6,231.6 L508.2,237 Z" fill="#464646"/>
<rect x="473.20" y="251.80" width="51.60" height="17.50" rx="4" fill="#e84e4b" stroke="#bb4242" stroke-width="1.2" />
<path d="M495.6,256.6 A5.8,5.8 0 1 0 502.4,256.6" fill="none" stroke="#f6cdb8" stroke-width="1.9"/>
<line x1="499" y1="253.9" x2="499" y2="261.6" stroke="#f6cdb8" stroke-width="1.9"/>
<rect x="474.20" y="275.20" width="49.60" height="6.60" rx="0" fill="#e0524a" stroke="#3e2020" stroke-width="1.3" />
<text x="473.70" y="300.30" font-size="12.2" fill="#5a5a5a" font-weight="bold" text-anchor="start" textLength="18.4" lengthAdjust="spacingAndGlyphs" >Oct</text>
<use href="#plusS" x="501.5" y="295.6"/>
<use href="#plusS" x="516.5" y="295.6"/>
<text x="473.70" y="319.80" font-size="12.2" fill="#5a5a5a" font-weight="bold" text-anchor="start" textLength="18.4" lengthAdjust="spacingAndGlyphs" >Acc</text>
<use href="#plusS" x="501.5" y="315.1"/>
<use href="#plusS" x="516.5" y="315.1"/>
<text x="473.70" y="339.30" font-size="12.2" fill="#5a5a5a" font-weight="bold" text-anchor="start" textLength="16.4" lengthAdjust="spacingAndGlyphs" >Sld</text>
<use href="#plusS" x="501.5" y="334.6"/>
<use href="#plusS" x="516.5" y="334.6"/>
<text x="473.70" y="359.50" font-size="12.2" fill="#5a5a5a" font-weight="bold" text-anchor="start" textLength="19.2" lengthAdjust="spacingAndGlyphs" >Prob</text>
<use href="#plusS" x="501.5" y="354.8"/>
<use href="#plusS" x="516.5" y="354.8"/>
<path d="M496.4,375.8 v-2.2 a2.6,2.6 0 0 1 5.2,0 v0.3" fill="none" stroke="#555555" stroke-width="1.7"/>
<rect x="494.20" y="375.50" width="9.80" height="7.00" rx="0.8" fill="#555555" stroke="none" stroke-width="1" />
<text x="556.00" y="65.40" font-size="11.5" fill="#5e5e5e" font-weight="bold" text-anchor="middle" textLength="7.2" lengthAdjust="spacingAndGlyphs" >6</text>
<path d="M556,105.2 L541.13,125.67 A25.3,25.3 0 1 1 570.87,125.67 Z" fill="#d9d9d9"/>
<path d="M540.78,126.15 A25.9,25.9 0 1 1 571.22,126.15" fill="none" stroke="#727272" stroke-width="1.3"/>
<circle cx="556.00" cy="104.70" r="14.8" fill="url(#kn)" stroke="#1e1e1e" stroke-width="2.1" />
<line x1="554.71" y1="106.43" x2="548.67" y2="113.63" stroke="#3a3a3a" stroke-width="6.2" stroke-linecap="round"/>
<line x1="554.71" y1="106.43" x2="548.67" y2="113.63" stroke="#f0f0e4" stroke-width="4.2" stroke-linecap="round"/>
<use href="#plusL" x="541.5" y="139.4"/>
<use href="#plusL" x="570.5" y="139.4"/>
<rect x="529.50" y="150.50" width="53.50" height="18.00" rx="0" fill="#c6c6c6" stroke="#aaaaaa" stroke-width="1" />
<text x="556.00" y="164.60" font-size="15.5" fill="#333333" font-weight="bold" text-anchor="middle" textLength="9.2" lengthAdjust="spacingAndGlyphs" >C</text>
<rect x="529.50" y="180.65" width="8.00" height="11.50" rx="0" fill="#d8d8d8" stroke="#8a8a8a" stroke-width="1" />
<rect x="540.50" y="178.65" width="8.50" height="15.50" rx="0" fill="#d8d8d8" stroke="#8a8a8a" stroke-width="1" />
<rect x="551.00" y="175.90" width="10.00" height="21.00" rx="0" fill="#e8524f" stroke="none" stroke-width="1" />
<rect x="563.30" y="178.65" width="8.70" height="15.50" rx="0" fill="#d8d8d8" stroke="#8a8a8a" stroke-width="1" />
<rect x="574.00" y="180.65" width="8.80" height="11.50" rx="0" fill="#d8d8d8" stroke="#8a8a8a" stroke-width="1" />
<rect x="530.20" y="203.80" width="51.60" height="17.50" rx="4" fill="#bdbdbd" stroke="#808080" stroke-width="1.3" />
<path d="M554.7,206.4 H557.3 L556.7,214.8 H555.3 Z" fill="#505050"/>
<circle cx="556.00" cy="217.40" r="1.1" fill="#505050" stroke="none" stroke-width="1" />
<rect x="530.20" y="227.80" width="51.60" height="17.50" rx="4" fill="#bdbdbd" stroke="#808080" stroke-width="1.3" />
<path d="M548.4,235.6 A6.8,6 0 0 0 561.6,236.8" fill="none" stroke="#464646" stroke-width="2.3"/>
<path d="M557.8,237.2 L561.6,231.6 L565.2,237 Z" fill="#464646"/>
<rect x="530.20" y="251.80" width="51.60" height="17.50" rx="4" fill="#e84e4b" stroke="#bb4242" stroke-width="1.2" />
<path d="M552.6,256.6 A5.8,5.8 0 1 0 559.4,256.6" fill="none" stroke="#f6cdb8" stroke-width="1.9"/>
<line x1="556" y1="253.9" x2="556" y2="261.6" stroke="#f6cdb8" stroke-width="1.9"/>
<rect x="531.20" y="275.20" width="49.60" height="6.60" rx="0" fill="#e0524a" stroke="#3e2020" stroke-width="1.3" />
<text x="530.70" y="300.30" font-size="12.2" fill="#5a5a5a" font-weight="bold" text-anchor="start" textLength="18.4" lengthAdjust="spacingAndGlyphs" >Oct</text>
<use href="#plusS" x="558.5" y="295.6"/>
<use href="#plusS" x="573.5" y="295.6"/>
<text x="530.70" y="319.80" font-size="12.2" fill="#5a5a5a" font-weight="bold" text-anchor="start" textLength="18.4" lengthAdjust="spacingAndGlyphs" >Acc</text>
<use href="#plusS" x="558.5" y="315.1"/>
<use href="#plusS" x="573.5" y="315.1"/>
<text x="530.70" y="339.30" font-size="12.2" fill="#5a5a5a" font-weight="bold" text-anchor="start" textLength="16.4" lengthAdjust="spacingAndGlyphs" >Sld</text>
<use href="#plusS" x="558.5" y="334.6"/>
<use href="#plusS" x="573.5" y="334.6"/>
<text x="530.70" y="359.50" font-size="12.2" fill="#5a5a5a" font-weight="bold" text-anchor="start" textLength="19.2" lengthAdjust="spacingAndGlyphs" >Prob</text>
<use href="#plusS" x="558.5" y="354.8"/>
<use href="#plusS" x="573.5" y="354.8"/>
<path d="M553.4,375.8 v-2.2 a2.6,2.6 0 0 1 5.2,0 v0.3" fill="none" stroke="#555555" stroke-width="1.7"/>
<rect x="551.20" y="375.50" width="9.80" height="7.00" rx="0.8" fill="#555555" stroke="none" stroke-width="1" />
<text x="613.00" y="65.40" font-size="11.5" fill="#5e5e5e" font-weight="bold" text-anchor="middle" textLength="7.2" lengthAdjust="spacingAndGlyphs" >7</text>
<path d="M613,105.2 L598.13,125.67 A25.3,25.3 0 1 1 627.87,125.67 Z" fill="#d9d9d9"/>
<path d="M597.78,126.15 A25.9,25.9 0 1 1 628.22,126.15" fill="none" stroke="#727272" stroke-width="1.3"/>
<circle cx="613.00" cy="104.70" r="14.8" fill="url(#kn)" stroke="#1e1e1e" stroke-width="2.1" />
<line x1="611.71" y1="106.43" x2="605.67" y2="113.63" stroke="#3a3a3a" stroke-width="6.2" stroke-linecap="round"/>
<line x1="611.71" y1="106.43" x2="605.67" y2="113.63" stroke="#f0f0e4" stroke-width="4.2" stroke-linecap="round"/>
<use href="#plusL" x="598.5" y="139.4"/>
<use href="#plusL" x="627.5" y="139.4"/>
<rect x="586.50" y="150.50" width="53.50" height="18.00" rx="0" fill="#c6c6c6" stroke="#aaaaaa" stroke-width="1" />
<text x="613.00" y="164.60" font-size="15.5" fill="#333333" font-weight="bold" text-anchor="middle" textLength="9.2" lengthAdjust="spacingAndGlyphs" >C</text>
<rect x="586.50" y="180.65" width="8.00" height="11.50" rx="0" fill="#d8d8d8" stroke="#8a8a8a" stroke-width="1" />
<rect x="597.50" y="178.65" width="8.50" height="15.50" rx="0" fill="#d8d8d8" stroke="#8a8a8a" stroke-width="1" />
<rect x="608.00" y="175.90" width="10.00" height="21.00" rx="0" fill="#e8524f" stroke="none" stroke-width="1" />
<rect x="620.30" y="178.65" width="8.70" height="15.50" rx="0" fill="#d8d8d8" stroke="#8a8a8a" stroke-width="1" />
<rect x="631.00" y="180.65" width="8.80" height="11.50" rx="0" fill="#d8d8d8" stroke="#8a8a8a" stroke-width="1" />
<rect x="587.20" y="203.80" width="51.60" height="17.50" rx="4" fill="#bdbdbd" stroke="#808080" stroke-width="1.3" />
<path d="M611.7,206.4 H614.3 L613.7,214.8 H612.3 Z" fill="#505050"/>
<circle cx="613.00" cy="217.40" r="1.1" fill="#505050" stroke="none" stroke-width="1" />
<rect x="587.20" y="227.80" width="51.60" height="17.50" rx="4" fill="#bdbdbd" stroke="#808080" stroke-width="1.3" />
<path d="M605.4,235.6 A6.8,6 0 0 0 618.6,236.8" fill="none" stroke="#464646" stroke-width="2.3"/>
<path d="M614.8,237.2 L618.6,231.6 L622.2,237 Z" fill="#464646"/>
<rect x="587.20" y="251.80" width="51.60" height="17.50" rx="4" fill="#e84e4b" stroke="#bb4242" stroke-width="1.2" />
<path d="M609.6,256.6 A5.8,5.8 0 1 0 616.4,256.6" fill="none" stroke="#f6cdb8" stroke-width="1.9"/>
<line x1="613" y1="253.9" x2="613" y2="261.6" stroke="#f6cdb8" stroke-width="1.9"/>
<rect x="588.20" y="275.20" width="49.60" height="6.60" rx="0" fill="#e0524a" stroke="#3e2020" stroke-width="1.3" />
<text x="587.70" y="300.30" font-size="12.2" fill="#5a5a5a" font-weight="bold" text-anchor="start" textLength="18.4" lengthAdjust="spacingAndGlyphs" >Oct</text>
<use href="#plusS" x="615.5" y="295.6"/>
<use href="#plusS" x="630.5" y="295.6"/>
<text x="587.70" y="319.80" font-size="12.2" fill="#5a5a5a" font-weight="bold" text-anchor="start" textLength="18.4" lengthAdjust="spacingAndGlyphs" >Acc</text>
<use href="#plusS" x="615.5" y="315.1"/>
<use href="#plusS" x="630.5" y="315.1"/>
<text x="587.70" y="339.30" font-size="12.2" fill="#5a5a5a" font-weight="bold" text-anchor="start" textLength="16.4" lengthAdjust="spacingAndGlyphs" >Sld</text>
<use href="#plusS" x="615.5" y="334.6"/>
<use href="#plusS" x="630.5" y="334.6"/>
<text x="587.70" y="359.50" font-size="12.2" fill="#5a5a5a" font-weight="bold" text-anchor="start" textLength="19.2" lengthAdjust="spacingAndGlyphs" >Prob</text>
<use href="#plusS" x="615.5" y="354.8"/>
<use href="#plusS" x="630.5" y="354.8"/>
<path d="M610.4,375.8 v-2.2 a2.6,2.6 0 0 1 5.2,0 v0.3" fill="none" stroke="#555555" stroke-width="1.7"/>
<rect x="608.20" y="375.50" width="9.80" height="7.00" rx="0.8" fill="#555555" stroke="none" stroke-width="1" />
<text x="670.00" y="65.40" font-size="11.5" fill="#5e5e5e" font-weight="bold" text-anchor="middle" textLength="7.2" lengthAdjust="spacingAndGlyphs" >8</text>
<path d="M670,105.2 L655.13,125.67 A25.3,25.3 0 1 1 684.87,125.67 Z" fill="#d9d9d9"/>
<path d="M654.78,126.15 A25.9,25.9 0 1 1 685.22,126.15" fill="none" stroke="#727272" stroke-width="1.3"/>
<circle cx="670.00" cy="104.70" r="14.8" fill="url(#kn)" stroke="#1e1e1e" stroke-width="2.1" />
<line x1="668.71" y1="106.43" x2="662.67" y2="113.63" stroke="#3a3a3a" stroke-width="6.2" stroke-linecap="round"/>
<line x1="668.71" y1="106.43" x2="662.67" y2="113.63" stroke="#f0f0e4" stroke-width="4.2" stroke-linecap="round"/>
<use href="#plusL" x="655.5" y="139.4"/>
<use href="#plusL" x="684.5" y="139.4"/>
<rect x="643.50" y="150.50" width="53.50" height="18.00" rx="0" fill="#c6c6c6" stroke="#aaaaaa" stroke-width="1" />
<text x="670.00" y="164.60" font-size="15.5" fill="#333333" font-weight="bold" text-anchor="middle" textLength="9.2" lengthAdjust="spacingAndGlyphs" >C</text>
<rect x="643.50" y="180.65" width="8.00" height="11.50" rx="0" fill="#d8d8d8" stroke="#8a8a8a" stroke-width="1" />
<rect x="654.50" y="178.65" width="8.50" height="15.50" rx="0" fill="#d8d8d8" stroke="#8a8a8a" stroke-width="1" />
<rect x="665.00" y="175.90" width="10.00" height="21.00" rx="0" fill="#e8524f" stroke="none" stroke-width="1" />
<rect x="677.30" y="178.65" width="8.70" height="15.50" rx="0" fill="#d8d8d8" stroke="#8a8a8a" stroke-width="1" />
<rect x="688.00" y="180.65" width="8.80" height="11.50" rx="0" fill="#d8d8d8" stroke="#8a8a8a" stroke-width="1" />
<rect x="644.20" y="203.80" width="51.60" height="17.50" rx="4" fill="#bdbdbd" stroke="#808080" stroke-width="1.3" />
<path d="M668.7,206.4 H671.3 L670.7,214.8 H669.3 Z" fill="#505050"/>
<circle cx="670.00" cy="217.40" r="1.1" fill="#505050" stroke="none" stroke-width="1" />
<rect x="644.20" y="227.80" width="51.60" height="17.50" rx="4" fill="#bdbdbd" stroke="#808080" stroke-width="1.3" />
<path d="M662.4,235.6 A6.8,6 0 0 0 675.6,236.8" fill="none" stroke="#464646" stroke-width="2.3"/>
<path d="M671.8,237.2 L675.6,231.6 L679.2,237 Z" fill="#464646"/>
<rect x="644.20" y="251.80" width="51.60" height="17.50" rx="4" fill="#e84e4b" stroke="#bb4242" stroke-width="1.2" />
<path d="M666.6,256.6 A5.8,5.8 0 1 0 673.4,256.6" fill="none" stroke="#f6cdb8" stroke-width="1.9"/>
<line x1="670" y1="253.9" x2="670" y2="261.6" stroke="#f6cdb8" stroke-width="1.9"/>
<rect x="645.20" y="275.20" width="49.60" height="6.60" rx="0" fill="#e0524a" stroke="#3e2020" stroke-width="1.3" />
<text x="644.70" y="300.30" font-size="12.2" fill="#5a5a5a" font-weight="bold" text-anchor="start" textLength="18.4" lengthAdjust="spacingAndGlyphs" >Oct</text>
<use href="#plusS" x="672.5" y="295.6"/>
<use href="#plusS" x="687.5" y="295.6"/>
<text x="644.70" y="319.80" font-size="12.2" fill="#5a5a5a" font-weight="bold" text-anchor="start" textLength="18.4" lengthAdjust="spacingAndGlyphs" >Acc</text>
<use href="#plusS" x="672.5" y="315.1"/>
<use href="#plusS" x="687.5" y="315.1"/>
<text x="644.70" y="339.30" font-size="12.2" fill="#5a5a5a" font-weight="bold" text-anchor="start" textLength="16.4" lengthAdjust="spacingAndGlyphs" >Sld</text>
<use href="#plusS" x="672.5" y="334.6"/>
<use href="#plusS" x="687.5" y="334.6"/>
<text x="644.70" y="359.50" font-size="12.2" fill="#5a5a5a" font-weight="bold" text-anchor="start" textLength="19.2" lengthAdjust="spacingAndGlyphs" >Prob</text>
<use href="#plusS" x="672.5" y="354.8"/>
<use href="#plusS" x="687.5" y="354.8"/>
<path d="M667.4,375.8 v-2.2 a2.6,2.6 0 0 1 5.2,0 v0.3" fill="none" stroke="#555555" stroke-width="1.7"/>
<rect x="665.20" y="375.50" width="9.80" height="7.00" rx="0.8" fill="#555555" stroke="none" stroke-width="1" />
<rect x="699.50" y="53.50" width="55.50" height="14.00" rx="0" fill="none" stroke="#8a8a8a" stroke-width="1" />
<text x="727.00" y="65.40" font-size="11.5" fill="#5e5e5e" font-weight="bold" text-anchor="middle" textLength="7.2" lengthAdjust="spacingAndGlyphs" >9</text>
<path d="M727,105.2 L712.13,125.67 A25.3,25.3 0 1 1 741.87,125.67 Z" fill="#d9d9d9"/>
<path d="M711.78,126.15 A25.9,25.9 0 1 1 742.22,126.15" fill="none" stroke="#727272" stroke-width="1.3"/>
<circle cx="727.00" cy="104.70" r="14.8" fill="url(#kn)" stroke="#1e1e1e" stroke-width="2.1" />
<line x1="725.71" y1="106.43" x2="719.67" y2="113.63" stroke="#3a3a3a" stroke-width="6.2" stroke-linecap="round"/>
<line x1="725.71" y1="106.43" x2="719.67" y2="113.63" stroke="#f0f0e4" stroke-width="4.2" stroke-linecap="round"/>
<use href="#plusL" x="712.5" y="139.4"/>
<use href="#plusL" x="741.5" y="139.4"/>
<rect x="700.50" y="150.50" width="53.50" height="18.00" rx="0" fill="#c6c6c6" stroke="#aaaaaa" stroke-width="1" />
<text x="727.00" y="164.60" font-size="15.5" fill="#333333" font-weight="bold" text-anchor="middle" textLength="9.2" lengthAdjust="spacingAndGlyphs" >C</text>
<rect x="700.50" y="180.65" width="8.00" height="11.50" rx="0" fill="#d8d8d8" stroke="#8a8a8a" stroke-width="1" />
<rect x="711.50" y="178.65" width="8.50" height="15.50" rx="0" fill="#d8d8d8" stroke="#8a8a8a" stroke-width="1" />
<rect x="722.00" y="175.90" width="10.00" height="21.00" rx="0" fill="#e8524f" stroke="none" stroke-width="1" />
<rect x="734.30" y="178.65" width="8.70" height="15.50" rx="0" fill="#d8d8d8" stroke="#8a8a8a" stroke-width="1" />
<rect x="745.00" y="180.65" width="8.80" height="11.50" rx="0" fill="#d8d8d8" stroke="#8a8a8a" stroke-width="1" />
<rect x="701.20" y="203.80" width="51.60" height="17.50" rx="4" fill="#bdbdbd" stroke="#808080" stroke-width="1.3" />
<path d="M725.7,206.4 H728.3 L727.7,214.8 H726.3 Z" fill="#505050"/>
<circle cx="727.00" cy="217.40" r="1.1" fill="#505050" stroke="none" stroke-width="1" />
<rect x="701.20" y="227.80" width="51.60" height="17.50" rx="4" fill="#bdbdbd" stroke="#808080" stroke-width="1.3" />
<path d="M719.4,235.6 A6.8,6 0 0 0 732.6,236.8" fill="none" stroke="#464646" stroke-width="2.3"/>
<path d="M728.8,237.2 L732.6,231.6 L736.2,237 Z" fill="#464646"/>
<rect x="701.20" y="251.80" width="51.60" height="17.50" rx="4" fill="#e84e4b" stroke="#bb4242" stroke-width="1.2" />
<path d="M723.6,256.6 A5.8,5.8 0 1 0 730.4,256.6" fill="none" stroke="#f6cdb8" stroke-width="1.9"/>
<line x1="727" y1="253.9" x2="727" y2="261.6" stroke="#f6cdb8" stroke-width="1.9"/>
<rect x="702.20" y="275.20" width="49.60" height="6.60" rx="0" fill="#e0524a" stroke="#3e2020" stroke-width="1.3" />
<text x="701.70" y="300.30" font-size="12.2" fill="#5a5a5a" font-weight="bold" text-anchor="start" textLength="18.4" lengthAdjust="spacingAndGlyphs" >Oct</text>
<use href="#plusS" x="729.5" y="295.6"/>
<use href="#plusS" x="744.5" y="295.6"/>
<text x="701.70" y="319.80" font-size="12.2" fill="#5a5a5a" font-weight="bold" text-anchor="start" textLength="18.4" lengthAdjust="spacingAndGlyphs" >Acc</text>
<use href="#plusS" x="729.5" y="315.1"/>
<use href="#plusS" x="744.5" y="315.1"/>
<text x="701.70" y="339.30" font-size="12.2" fill="#5a5a5a" font-weight="bold" text-anchor="start" textLength="16.4" lengthAdjust="spacingAndGlyphs" >Sld</text>
<use href="#plusS" x="729.5" y="334.6"/>
<use href="#plusS" x="744.5" y="334.6"/>
<text x="701.70" y="359.50" font-size="12.2" fill="#5a5a5a" font-weight="bold" text-anchor="start" textLength="19.2" lengthAdjust="spacingAndGlyphs" >Prob</text>
<use href="#plusS" x="729.5" y="354.8"/>
<use href="#plusS" x="744.5" y="354.8"/>
<path d="M724.4,375.8 v-2.2 a2.6,2.6 0 0 1 5.2,0 v0.3" fill="none" stroke="#555555" stroke-width="1.7"/>
<rect x="722.20" y="375.50" width="9.80" height="7.00" rx="0.8" fill="#555555" stroke="none" stroke-width="1" />
<text x="784.00" y="65.40" font-size="11.5" fill="#5e5e5e" font-weight="bold" text-anchor="middle" textLength="13.5" lengthAdjust="spacingAndGlyphs" >10</text>
<path d="M784,105.2 L769.13,125.67 A25.3,25.3 0 1 1 798.87,125.67 Z" fill="#d9d9d9"/>
<path d="M768.78,126.15 A25.9,25.9 0 1 1 799.22,126.15" fill="none" stroke="#727272" stroke-width="1.3"/>
<circle cx="784.00" cy="104.70" r="14.8" fill="url(#kn)" stroke="#1e1e1e" stroke-width="2.1" />
<line x1="782.71" y1="106.43" x2="776.67" y2="113.63" stroke="#3a3a3a" stroke-width="6.2" stroke-linecap="round"/>
<line x1="782.71" y1="106.43" x2="776.67" y2="113.63" stroke="#f0f0e4" stroke-width="4.2" stroke-linecap="round"/>
<use href="#plusL" x="769.5" y="139.4"/>
<use href="#plusL" x="798.5" y="139.4"/>
<rect x="757.50" y="150.50" width="53.50" height="18.00" rx="0" fill="#c6c6c6" stroke="#aaaaaa" stroke-width="1" />
<text x="784.00" y="164.60" font-size="15.5" fill="#333333" font-weight="bold" text-anchor="middle" textLength="9.2" lengthAdjust="spacingAndGlyphs" >C</text>
<rect x="757.50" y="180.65" width="8.00" height="11.50" rx="0" fill="#d8d8d8" stroke="#8a8a8a" stroke-width="1" />
<rect x="768.50" y="178.65" width="8.50" height="15.50" rx="0" fill="#d8d8d8" stroke="#8a8a8a" stroke-width="1" />
<rect x="779.00" y="175.90" width="10.00" height="21.00" rx="0" fill="#e8524f" stroke="none" stroke-width="1" />
<rect x="791.30" y="178.65" width="8.70" height="15.50" rx="0" fill="#d8d8d8" stroke="#8a8a8a" stroke-width="1" />
<rect x="802.00" y="180.65" width="8.80" height="11.50" rx="0" fill="#d8d8d8" stroke="#8a8a8a" stroke-width="1" />
<rect x="758.20" y="203.80" width="51.60" height="17.50" rx="4" fill="#bdbdbd" stroke="#808080" stroke-width="1.3" />
<path d="M782.7,206.4 H785.3 L784.7,214.8 H783.3 Z" fill="#505050"/>
<circle cx="784.00" cy="217.40" r="1.1" fill="#505050" stroke="none" stroke-width="1" />
<rect x="758.20" y="227.80" width="51.60" height="17.50" rx="4" fill="#bdbdbd" stroke="#808080" stroke-width="1.3" />
<path d="M776.4,235.6 A6.8,6 0 0 0 789.6,236.8" fill="none" stroke="#464646" stroke-width="2.3"/>
<path d="M785.8,237.2 L789.6,231.6 L793.2,237 Z" fill="#464646"/>
<rect x="758.20" y="251.80" width="51.60" height="17.50" rx="4" fill="#e84e4b" stroke="#bb4242" stroke-width="1.2" />
<path d="M780.6,256.6 A5.8,5.8 0 1 0 787.4,256.6" fill="none" stroke="#f6cdb8" stroke-width="1.9"/>
<line x1="784" y1="253.9" x2="784" y2="261.6" stroke="#f6cdb8" stroke-width="1.9"/>
<rect x="759.20" y="275.20" width="49.60" height="6.60" rx="0" fill="#e0524a" stroke="#3e2020" stroke-width="1.3" />
<text x="758.70" y="300.30" font-size="12.2" fill="#5a5a5a" font-weight="bold" text-anchor="start" textLength="18.4" lengthAdjust="spacingAndGlyphs" >Oct</text>
<use href="#plusS" x="786.5" y="295.6"/>
<use href="#plusS" x="801.5" y="295.6"/>
<text x="758.70" y="319.80" font-size="12.2" fill="#5a5a5a" font-weight="bold" text-anchor="start" textLength="18.4" lengthAdjust="spacingAndGlyphs" >Acc</text>
<use href="#plusS" x="786.5" y="315.1"/>
<use href="#plusS" x="801.5" y="315.1"/>
<text x="758.70" y="339.30" font-size="12.2" fill="#5a5a5a" font-weight="bold" text-anchor="start" textLength="16.4" lengthAdjust="spacingAndGlyphs" >Sld</text>
<use href="#plusS" x="786.5" y="334.6"/>
<use href="#plusS" x="801.5" y="334.6"/>
<text x="758.70" y="359.50" font-size="12.2" fill="#5a5a5a" font-weight="bold" text-anchor="start" textLength="19.2" lengthAdjust="spacingAndGlyphs" >Prob</text>
<use href="#plusS" x="786.5" y="354.8"/>
<use href="#plusS" x="801.5" y="354.8"/>
<path d="M781.4,375.8 v-2.2 a2.6,2.6 0 0 1 5.2,0 v0.3" fill="none" stroke="#555555" stroke-width="1.7"/>
<rect x="779.20" y="375.50" width="9.80" height="7.00" rx="0.8" fill="#555555" stroke="none" stroke-width="1" />
<text x="841.00" y="65.40" font-size="11.5" fill="#5e5e5e" font-weight="bold" text-anchor="middle" textLength="13.5" lengthAdjust="spacingAndGlyphs" >11</text>
<path d="M841,105.2 L826.13,125.67 A25.3,25.3 0 1 1 855.87,125.67 Z" fill="#d9d9d9"/>
<path d="M825.78,126.15 A25.9,25.9 0 1 1 856.22,126.15" fill="none" stroke="#727272" stroke-width="1.3"/>
<circle cx="841.00" cy="104.70" r="14.8" fill="url(#kn)" stroke="#1e1e1e" stroke-width="2.1" />
<line x1="839.71" y1="106.43" x2="833.67" y2="113.63" stroke="#3a3a3a" stroke-width="6.2" stroke-linecap="round"/>
<line x1="839.71" y1="106.43" x2="833.67" y2="113.63" stroke="#f0f0e4" stroke-width="4.2" stroke-linecap="round"/>
<use href="#plusL" x="826.5" y="139.4"/>
<use href="#plusL" x="855.5" y="139.4"/>
<rect x="814.50" y="150.50" width="53.50" height="18.00" rx="0" fill="#c6c6c6" stroke="#aaaaaa" stroke-width="1" />
<text x="841.00" y="164.60" font-size="15.5" fill="#333333" font-weight="bold" text-anchor="middle" textLength="9.2" lengthAdjust="spacingAndGlyphs" >C</text>
<rect x="814.50" y="180.65" width="8.00" height="11.50" rx="0" fill="#d8d8d8" stroke="#8a8a8a" stroke-width="1" />
<rect x="825.50" y="178.65" width="8.50" height="15.50" rx="0" fill="#d8d8d8" stroke="#8a8a8a" stroke-width="1" />
<rect x="836.00" y="175.90" width="10.00" height="21.00" rx="0" fill="#e8524f" stroke="none" stroke-width="1" />
<rect x="848.30" y="178.65" width="8.70" height="15.50" rx="0" fill="#d8d8d8" stroke="#8a8a8a" stroke-width="1" />
<rect x="859.00" y="180.65" width="8.80" height="11.50" rx="0" fill="#d8d8d8" stroke="#8a8a8a" stroke-width="1" />
<rect x="815.20" y="203.80" width="51.60" height="17.50" rx="4" fill="#bdbdbd" stroke="#808080" stroke-width="1.3" />
<path d="M839.7,206.4 H842.3 L841.7,214.8 H840.3 Z" fill="#505050"/>
<circle cx="841.00" cy="217.40" r="1.1" fill="#505050" stroke="none" stroke-width="1" />
<rect x="815.20" y="227.80" width="51.60" height="17.50" rx="4" fill="#bdbdbd" stroke="#808080" stroke-width="1.3" />
<path d="M833.4,235.6 A6.8,6 0 0 0 846.6,236.8" fill="none" stroke="#464646" stroke-width="2.3"/>
<path d="M842.8,237.2 L846.6,231.6 L850.2,237 Z" fill="#464646"/>
<rect x="815.20" y="251.80" width="51.60" height="17.50" rx="4" fill="#e84e4b" stroke="#bb4242" stroke-width="1.2" />
<path d="M837.6,256.6 A5.8,5.8 0 1 0 844.4,256.6" fill="none" stroke="#f6cdb8" stroke-width="1.9"/>
<line x1="841" y1="253.9" x2="841" y2="261.6" stroke="#f6cdb8" stroke-width="1.9"/>
<rect x="816.20" y="275.20" width="49.60" height="6.60" rx="0" fill="#e0524a" stroke="#3e2020" stroke-width="1.3" />
<text x="815.70" y="300.30" font-size="12.2" fill="#5a5a5a" font-weight="bold" text-anchor="start" textLength="18.4" lengthAdjust="spacingAndGlyphs" >Oct</text>
<use href="#plusS" x="843.5" y="295.6"/>
<use href="#plusS" x="858.5" y="295.6"/>
<text x="815.70" y="319.80" font-size="12.2" fill="#5a5a5a" font-weight="bold" text-anchor="start" textLength="18.4" lengthAdjust="spacingAndGlyphs" >Acc</text>
<use href="#plusS" x="843.5" y="315.1"/>
<use href="#plusS" x="858.5" y="315.1"/>
<text x="815.70" y="339.30" font-size="12.2" fill="#5a5a5a" font-weight="bold" text-anchor="start" textLength="16.4" lengthAdjust="spacingAndGlyphs" >Sld</text>
<use href="#plusS" x="843.5" y="334.6"/>
<use href="#plusS" x="858.5" y="334.6"/>
<text x="815.70" y="359.50" font-size="12.2" fill="#5a5a5a" font-weight="bold" text-anchor="start" textLength="19.2" lengthAdjust="spacingAndGlyphs" >Prob</text>
<use href="#plusS" x="843.5" y="354.8"/>
<use href="#plusS" x="858.5" y="354.8"/>
<path d="M838.4,375.8 v-2.2 a2.6,2.6 0 0 1 5.2,0 v0.3" fill="none" stroke="#555555" stroke-width="1.7"/>
<rect x="836.20" y="375.50" width="9.80" height="7.00" rx="0.8" fill="#555555" stroke="none" stroke-width="1" />
<text x="898.00" y="65.40" font-size="11.5" fill="#5e5e5e" font-weight="bold" text-anchor="middle" textLength="13.5" lengthAdjust="spacingAndGlyphs" >12</text>
<path d="M898,105.2 L883.13,125.67 A25.3,25.3 0 1 1 912.87,125.67 Z" fill="#d9d9d9"/>
<path d="M882.78,126.15 A25.9,25.9 0 1 1 913.22,126.15" fill="none" stroke="#727272" stroke-width="1.3"/>
<circle cx="898.00" cy="104.70" r="14.8" fill="url(#kn)" stroke="#1e1e1e" stroke-width="2.1" />
<line x1="896.71" y1="106.43" x2="890.67" y2="113.63" stroke="#3a3a3a" stroke-width="6.2" stroke-linecap="round"/>
<line x1="896.71" y1="106.43" x2="890.67" y2="113.63" stroke="#f0f0e4" stroke-width="4.2" stroke-linecap="round"/>
<use href="#plusL" x="883.5" y="139.4"/>
<use href="#plusL" x="912.5" y="139.4"/>
<rect x="871.50" y="150.50" width="53.50" height="18.00" rx="0" fill="#c6c6c6" stroke="#aaaaaa" stroke-width="1" />
<text x="898.00" y="164.60" font-size="15.5" fill="#333333" font-weight="bold" text-anchor="middle" textLength="9.2" lengthAdjust="spacingAndGlyphs" >C</text>
<rect x="871.50" y="180.65" width="8.00" height="11.50" rx="0" fill="#d8d8d8" stroke="#8a8a8a" stroke-width="1" />
<rect x="882.50" y="178.65" width="8.50" height="15.50" rx="0" fill="#d8d8d8" stroke="#8a8a8a" stroke-width="1" />
<rect x="893.00" y="175.90" width="10.00" height="21.00" rx="0" fill="#e8524f" stroke="none" stroke-width="1" />
<rect x="905.30" y="178.65" width="8.70" height="15.50" rx="0" fill="#d8d8d8" stroke="#8a8a8a" stroke-width="1" />
<rect x="916.00" y="180.65" width="8.80" height="11.50" rx="0" fill="#d8d8d8" stroke="#8a8a8a" stroke-width="1" />
<rect x="872.20" y="203.80" width="51.60" height="17.50" rx="4" fill="#bdbdbd" stroke="#808080" stroke-width="1.3" />
<path d="M896.7,206.4 H899.3 L898.7,214.8 H897.3 Z" fill="#505050"/>
<circle cx="898.00" cy="217.40" r="1.1" fill="#505050" stroke="none" stroke-width="1" />
<rect x="872.20" y="227.80" width="51.60" height="17.50" rx="4" fill="#bdbdbd" stroke="#808080" stroke-width="1.3" />
<path d="M890.4,235.6 A6.8,6 0 0 0 903.6,236.8" fill="none" stroke="#464646" stroke-width="2.3"/>
<path d="M899.8,237.2 L903.6,231.6 L907.2,237 Z" fill="#464646"/>
<rect x="872.20" y="251.80" width="51.60" height="17.50" rx="4" fill="#e84e4b" stroke="#bb4242" stroke-width="1.2" />
<path d="M894.6,256.6 A5.8,5.8 0 1 0 901.4,256.6" fill="none" stroke="#f6cdb8" stroke-width="1.9"/>
<line x1="898" y1="253.9" x2="898" y2="261.6" stroke="#f6cdb8" stroke-width="1.9"/>
<rect x="873.20" y="275.20" width="49.60" height="6.60" rx="0" fill="#e0524a" stroke="#3e2020" stroke-width="1.3" />
<text x="872.70" y="300.30" font-size="12.2" fill="#5a5a5a" font-weight="bold" text-anchor="start" textLength="18.4" lengthAdjust="spacingAndGlyphs" >Oct</text>
<use href="#plusS" x="900.5" y="295.6"/>
<use href="#plusS" x="915.5" y="295.6"/>
<text x="872.70" y="319.80" font-size="12.2" fill="#5a5a5a" font-weight="bold" text-anchor="start" textLength="18.4" lengthAdjust="spacingAndGlyphs" >Acc</text>
<use href="#plusS" x="900.5" y="315.1"/>
<use href="#plusS" x="915.5" y="315.1"/>
<text x="872.70" y="339.30" font-size="12.2" fill="#5a5a5a" font-weight="bold" text-anchor="start" textLength="16.4" lengthAdjust="spacingAndGlyphs" >Sld</text>
<use href="#plusS" x="900.5" y="334.6"/>
<use href="#plusS" x="915.5" y="334.6"/>
<text x="872.70" y="359.50" font-size="12.2" fill="#5a5a5a" font-weight="bold" text-anchor="start" textLength="19.2" lengthAdjust="spacingAndGlyphs" >Prob</text>
<use href="#plusS" x="900.5" y="354.8"/>
<use href="#plusS" x="915.5" y="354.8"/>
<path d="M895.4,375.8 v-2.2 a2.6,2.6 0 0 1 5.2,0 v0.3" fill="none" stroke="#555555" stroke-width="1.7"/>
<rect x="893.20" y="375.50" width="9.80" height="7.00" rx="0.8" fill="#555555" stroke="none" stroke-width="1" />
<rect x="927.50" y="53.50" width="55.50" height="14.00" rx="0" fill="none" stroke="#8a8a8a" stroke-width="1" />
<text x="955.00" y="65.40" font-size="11.5" fill="#5e5e5e" font-weight="bold" text-anchor="middle" textLength="13.5" lengthAdjust="spacingAndGlyphs" >13</text>
<path d="M955,105.2 L940.13,125.67 A25.3,25.3 0 1 1 969.87,125.67 Z" fill="#d9d9d9"/>
<path d="M939.78,126.15 A25.9,25.9 0 1 1 970.22,126.15" fill="none" stroke="#727272" stroke-width="1.3"/>
<circle cx="955.00" cy="104.70" r="14.8" fill="url(#kn)" stroke="#1e1e1e" stroke-width="2.1" />
<line x1="953.71" y1="106.43" x2="947.67" y2="113.63" stroke="#3a3a3a" stroke-width="6.2" stroke-linecap="round"/>
<line x1="953.71" y1="106.43" x2="947.67" y2="113.63" stroke="#f0f0e4" stroke-width="4.2" stroke-linecap="round"/>
<use href="#plusL" x="940.5" y="139.4"/>
<use href="#plusL" x="969.5" y="139.4"/>
<rect x="928.50" y="150.50" width="53.50" height="18.00" rx="0" fill="#c6c6c6" stroke="#aaaaaa" stroke-width="1" />
<text x="955.00" y="164.60" font-size="15.5" fill="#333333" font-weight="bold" text-anchor="middle" textLength="9.2" lengthAdjust="spacingAndGlyphs" >C</text>
<rect x="928.50" y="180.65" width="8.00" height="11.50" rx="0" fill="#d8d8d8" stroke="#8a8a8a" stroke-width="1" />
<rect x="939.50" y="178.65" width="8.50" height="15.50" rx="0" fill="#d8d8d8" stroke="#8a8a8a" stroke-width="1" />
<rect x="950.00" y="175.90" width="10.00" height="21.00" rx="0" fill="#e8524f" stroke="none" stroke-width="1" />
<rect x="962.30" y="178.65" width="8.70" height="15.50" rx="0" fill="#d8d8d8" stroke="#8a8a8a" stroke-width="1" />
<rect x="973.00" y="180.65" width="8.80" height="11.50" rx="0" fill="#d8d8d8" stroke="#8a8a8a" stroke-width="1" />
<rect x="929.20" y="203.80" width="51.60" height="17.50" rx="4" fill="#bdbdbd" stroke="#808080" stroke-width="1.3" />
<path d="M953.7,206.4 H956.3 L955.7,214.8 H954.3 Z" fill="#505050"/>
<circle cx="955.00" cy="217.40" r="1.1" fill="#505050" stroke="none" stroke-width="1" />
<rect x="929.20" y="227.80" width="51.60" height="17.50" rx="4" fill="#bdbdbd" stroke="#808080" stroke-width="1.3" />
<path d="M947.4,235.6 A6.8,6 0 0 0 960.6,236.8" fill="none" stroke="#464646" stroke-width="2.3"/>
<path d="M956.8,237.2 L960.6,231.6 L964.2,237 Z" fill="#464646"/>
<rect x="929.20" y="251.80" width="51.60" height="17.50" rx="4" fill="#e84e4b" stroke="#bb4242" stroke-width="1.2" />
<path d="M951.6,256.6 A5.8,5.8 0 1 0 958.4,256.6" fill="none" stroke="#f6cdb8" stroke-width="1.9"/>
<line x1="955" y1="253.9" x2="955" y2="261.6" stroke="#f6cdb8" stroke-width="1.9"/>
<rect x="930.20" y="275.20" width="49.60" height="6.60" rx="0" fill="#e0524a" stroke="#3e2020" stroke-width="1.3" />
<text x="929.70" y="300.30" font-size="12.2" fill="#5a5a5a" font-weight="bold" text-anchor="start" textLength="18.4" lengthAdjust="spacingAndGlyphs" >Oct</text>
<use href="#plusS" x="957.5" y="295.6"/>
<use href="#plusS" x="972.5" y="295.6"/>
<text x="929.70" y="319.80" font-size="12.2" fill="#5a5a5a" font-weight="bold" text-anchor="start" textLength="18.4" lengthAdjust="spacingAndGlyphs" >Acc</text>
<use href="#plusS" x="957.5" y="315.1"/>
<use href="#plusS" x="972.5" y="315.1"/>
<text x="929.70" y="339.30" font-size="12.2" fill="#5a5a5a" font-weight="bold" text-anchor="start" textLength="16.4" lengthAdjust="spacingAndGlyphs" >Sld</text>
<use href="#plusS" x="957.5" y="334.6"/>
<use href="#plusS" x="972.5" y="334.6"/>
<text x="929.70" y="359.50" font-size="12.2" fill="#5a5a5a" font-weight="bold" text-anchor="start" textLength="19.2" lengthAdjust="spacingAndGlyphs" >Prob</text>
<use href="#plusS" x="957.5" y="354.8"/>
<use href="#plusS" x="972.5" y="354.8"/>
<path d="M952.4,375.8 v-2.2 a2.6,2.6 0 0 1 5.2,0 v0.3" fill="none" stroke="#555555" stroke-width="1.7"/>
<rect x="950.20" y="375.50" width="9.80" height="7.00" rx="0.8" fill="#555555" stroke="none" stroke-width="1" />
<text x="1012.00" y="65.40" font-size="11.5" fill="#5e5e5e" font-weight="bold" text-anchor="middle" textLength="13.5" lengthAdjust="spacingAndGlyphs" >14</text>
<path d="M1012,105.2 L997.13,125.67 A25.3,25.3 0 1 1 1026.87,125.67 Z" fill="#d9d9d9"/>
<path d="M996.78,126.15 A25.9,25.9 0 1 1 1027.22,126.15" fill="none" stroke="#727272" stroke-width="1.3"/>
<circle cx="1012.00" cy="104.70" r="14.8" fill="url(#kn)" stroke="#1e1e1e" stroke-width="2.1" />
<line x1="1010.71" y1="106.43" x2="1004.67" y2="113.63" stroke="#3a3a3a" stroke-width="6.2" stroke-linecap="round"/>
<line x1="1010.71" y1="106.43" x2="1004.67" y2="113.63" stroke="#f0f0e4" stroke-width="4.2" stroke-linecap="round"/>
<use href="#plusL" x="997.5" y="139.4"/>
<use href="#plusL" x="1026.5" y="139.4"/>
<rect x="985.50" y="150.50" width="53.50" height="18.00" rx="0" fill="#c6c6c6" stroke="#aaaaaa" stroke-width="1" />
<text x="1012.00" y="164.60" font-size="15.5" fill="#333333" font-weight="bold" text-anchor="middle" textLength="9.2" lengthAdjust="spacingAndGlyphs" >C</text>
<rect x="985.50" y="180.65" width="8.00" height="11.50" rx="0" fill="#d8d8d8" stroke="#8a8a8a" stroke-width="1" />
<rect x="996.50" y="178.65" width="8.50" height="15.50" rx="0" fill="#d8d8d8" stroke="#8a8a8a" stroke-width="1" />
<rect x="1007.00" y="175.90" width="10.00" height="21.00" rx="0" fill="#e8524f" stroke="none" stroke-width="1" />
<rect x="1019.30" y="178.65" width="8.70" height="15.50" rx="0" fill="#d8d8d8" stroke="#8a8a8a" stroke-width="1" />
<rect x="1030.00" y="180.65" width="8.80" height="11.50" rx="0" fill="#d8d8d8" stroke="#8a8a8a" stroke-width="1" />
<rect x="986.20" y="203.80" width="51.60" height="17.50" rx="4" fill="#bdbdbd" stroke="#808080" stroke-width="1.3" />
<path d="M1010.7,206.4 H1013.3 L1012.7,214.8 H1011.3 Z" fill="#505050"/>
<circle cx="1012.00" cy="217.40" r="1.1" fill="#505050" stroke="none" stroke-width="1" />
<rect x="986.20" y="227.80" width="51.60" height="17.50" rx="4" fill="#bdbdbd" stroke="#808080" stroke-width="1.3" />
<path d="M1004.4,235.6 A6.8,6 0 0 0 1017.6,236.8" fill="none" stroke="#464646" stroke-width="2.3"/>
<path d="M1013.8,237.2 L1017.6,231.6 L1021.2,237 Z" fill="#464646"/>
<rect x="986.20" y="251.80" width="51.60" height="17.50" rx="4" fill="#e84e4b" stroke="#bb4242" stroke-width="1.2" />
<path d="M1008.6,256.6 A5.8,5.8 0 1 0 1015.4,256.6" fill="none" stroke="#f6cdb8" stroke-width="1.9"/>
<line x1="1012" y1="253.9" x2="1012" y2="261.6" stroke="#f6cdb8" stroke-width="1.9"/>
<rect x="987.20" y="275.20" width="49.60" height="6.60" rx="0" fill="#e0524a" stroke="#3e2020" stroke-width="1.3" />
<text x="986.70" y="300.30" font-size="12.2" fill="#5a5a5a" font-weight="bold" text-anchor="start" textLength="18.4" lengthAdjust="spacingAndGlyphs" >Oct</text>
<use href="#plusS" x="1014.5" y="295.6"/>
<use href="#plusS" x="1029.5" y="295.6"/>
<text x="986.70" y="319.80" font-size="12.2" fill="#5a5a5a" font-weight="bold" text-anchor="start" textLength="18.4" lengthAdjust="spacingAndGlyphs" >Acc</text>
<use href="#plusS" x="1014.5" y="315.1"/>
<use href="#plusS" x="1029.5" y="315.1"/>
<text x="986.70" y="339.30" font-size="12.2" fill="#5a5a5a" font-weight="bold" text-anchor="start" textLength="16.4" lengthAdjust="spacingAndGlyphs" >Sld</text>
<use href="#plusS" x="1014.5" y="334.6"/>
<use href="#plusS" x="1029.5" y="334.6"/>
<text x="986.70" y="359.50" font-size="12.2" fill="#5a5a5a" font-weight="bold" text-anchor="start" textLength="19.2" lengthAdjust="spacingAndGlyphs" >Prob</text>
<use href="#plusS" x="1014.5" y="354.8"/>
<use href="#plusS" x="1029.5" y="354.8"/>
<path d="M1009.4,375.8 v-2.2 a2.6,2.6 0 0 1 5.2,0 v0.3" fill="none" stroke="#555555" stroke-width="1.7"/>
<rect x="1007.20" y="375.50" width="9.80" height="7.00" rx="0.8" fill="#555555" stroke="none" stroke-width="1" />
<text x="1069.00" y="65.40" font-size="11.5" fill="#5e5e5e" font-weight="bold" text-anchor="middle" textLength="13.5" lengthAdjust="spacingAndGlyphs" >15</text>
<path d="M1069,105.2 L1054.13,125.67 A25.3,25.3 0 1 1 1083.87,125.67 Z" fill="#d9d9d9"/>
<path d="M1053.78,126.15 A25.9,25.9 0 1 1 1084.22,126.15" fill="none" stroke="#727272" stroke-width="1.3"/>
<circle cx="1069.00" cy="104.70" r="14.8" fill="url(#kn)" stroke="#1e1e1e" stroke-width="2.1" />
<line x1="1067.71" y1="106.43" x2="1061.67" y2="113.63" stroke="#3a3a3a" stroke-width="6.2" stroke-linecap="round"/>
<line x1="1067.71" y1="106.43" x2="1061.67" y2="113.63" stroke="#f0f0e4" stroke-width="4.2" stroke-linecap="round"/>
<use href="#plusL" x="1054.5" y="139.4"/>
<use href="#plusL" x="1083.5" y="139.4"/>
<rect x="1042.50" y="150.50" width="53.50" height="18.00" rx="0" fill="#c6c6c6" stroke="#aaaaaa" stroke-width="1" />
<text x="1069.00" y="164.60" font-size="15.5" fill="#333333" font-weight="bold" text-anchor="middle" textLength="9.2" lengthAdjust="spacingAndGlyphs" >C</text>
<rect x="1042.50" y="180.65" width="8.00" height="11.50" rx="0" fill="#d8d8d8" stroke="#8a8a8a" stroke-width="1" />
<rect x="1053.50" y="178.65" width="8.50" height="15.50" rx="0" fill="#d8d8d8" stroke="#8a8a8a" stroke-width="1" />
<rect x="1064.00" y="175.90" width="10.00" height="21.00" rx="0" fill="#e8524f" stroke="none" stroke-width="1" />
<rect x="1076.30" y="178.65" width="8.70" height="15.50" rx="0" fill="#d8d8d8" stroke="#8a8a8a" stroke-width="1" />
<rect x="1087.00" y="180.65" width="8.80" height="11.50" rx="0" fill="#d8d8d8" stroke="#8a8a8a" stroke-width="1" />
<rect x="1043.20" y="203.80" width="51.60" height="17.50" rx="4" fill="#bdbdbd" stroke="#808080" stroke-width="1.3" />
<path d="M1067.7,206.4 H1070.3 L1069.7,214.8 H1068.3 Z" fill="#505050"/>
<circle cx="1069.00" cy="217.40" r="1.1" fill="#505050" stroke="none" stroke-width="1" />
<rect x="1043.20" y="227.80" width="51.60" height="17.50" rx="4" fill="#bdbdbd" stroke="#808080" stroke-width="1.3" />
<path d="M1061.4,235.6 A6.8,6 0 0 0 1074.6,236.8" fill="none" stroke="#464646" stroke-width="2.3"/>
<path d="M1070.8,237.2 L1074.6,231.6 L1078.2,237 Z" fill="#464646"/>
<rect x="1043.20" y="251.80" width="51.60" height="17.50" rx="4" fill="#e84e4b" stroke="#bb4242" stroke-width="1.2" />
<path d="M1065.6,256.6 A5.8,5.8 0 1 0 1072.4,256.6" fill="none" stroke="#f6cdb8" stroke-width="1.9"/>
<line x1="1069" y1="253.9" x2="1069" y2="261.6" stroke="#f6cdb8" stroke-width="1.9"/>
<rect x="1044.20" y="275.20" width="49.60" height="6.60" rx="0" fill="#e0524a" stroke="#3e2020" stroke-width="1.3" />
<text x="1043.70" y="300.30" font-size="12.2" fill="#5a5a5a" font-weight="bold" text-anchor="start" textLength="18.4" lengthAdjust="spacingAndGlyphs" >Oct</text>
<use href="#plusS" x="1071.5" y="295.6"/>
<use href="#plusS" x="1086.5" y="295.6"/>
<text x="1043.70" y="319.80" font-size="12.2" fill="#5a5a5a" font-weight="bold" text-anchor="start" textLength="18.4" lengthAdjust="spacingAndGlyphs" >Acc</text>
<use href="#plusS" x="1071.5" y="315.1"/>
<use href="#plusS" x="1086.5" y="315.1"/>
<text x="1043.70" y="339.30" font-size="12.2" fill="#5a5a5a" font-weight="bold" text-anchor="start" textLength="16.4" lengthAdjust="spacingAndGlyphs" >Sld</text>
<use href="#plusS" x="1071.5" y="334.6"/>
<use href="#plusS" x="1086.5" y="334.6"/>
<text x="1043.70" y="359.50" font-size="12.2" fill="#5a5a5a" font-weight="bold" text-anchor="start" textLength="19.2" lengthAdjust="spacingAndGlyphs" >Prob</text>
<use href="#plusS" x="1071.5" y="354.8"/>
<use href="#plusS" x="1086.5" y="354.8"/>
<path d="M1066.4,375.8 v-2.2 a2.6,2.6 0 0 1 5.2,0 v0.3" fill="none" stroke="#555555" stroke-width="1.7"/>
<rect x="1064.20" y="375.50" width="9.80" height="7.00" rx="0.8" fill="#555555" stroke="none" stroke-width="1" />
<text x="1126.00" y="65.40" font-size="11.5" fill="#5e5e5e" font-weight="bold" text-anchor="middle" textLength="13.5" lengthAdjust="spacingAndGlyphs" >16</text>
<path d="M1126,105.2 L1111.13,125.67 A25.3,25.3 0 1 1 1140.87,125.67 Z" fill="#d9d9d9"/>
<path d="M1110.78,126.15 A25.9,25.9 0 1 1 1141.22,126.15" fill="none" stroke="#727272" stroke-width="1.3"/>
<circle cx="1126.00" cy="104.70" r="14.8" fill="url(#kn)" stroke="#1e1e1e" stroke-width="2.1" />
<line x1="1124.71" y1="106.43" x2="1118.67" y2="113.63" stroke="#3a3a3a" stroke-width="6.2" stroke-linecap="round"/>
<line x1="1124.71" y1="106.43" x2="1118.67" y2="113.63" stroke="#f0f0e4" stroke-width="4.2" stroke-linecap="round"/>
<use href="#plusL" x="1111.5" y="139.4"/>
<use href="#plusL" x="1140.5" y="139.4"/>
<rect x="1099.50" y="150.50" width="53.50" height="18.00" rx="0" fill="#c6c6c6" stroke="#aaaaaa" stroke-width="1" />
<text x="1126.00" y="164.60" font-size="15.5" fill="#333333" font-weight="bold" text-anchor="middle" textLength="9.2" lengthAdjust="spacingAndGlyphs" >C</text>
<rect x="1099.50" y="180.65" width="8.00" height="11.50" rx="0" fill="#d8d8d8" stroke="#8a8a8a" stroke-width="1" />
<rect x="1110.50" y="178.65" width="8.50" height="15.50" rx="0" fill="#d8d8d8" stroke="#8a8a8a" stroke-width="1" />
<rect x="1121.00" y="175.90" width="10.00" height="21.00" rx="0" fill="#e8524f" stroke="none" stroke-width="1" />
<rect x="1133.30" y="178.65" width="8.70" height="15.50" rx="0" fill="#d8d8d8" stroke="#8a8a8a" stroke-width="1" />
<rect x="1144.00" y="180.65" width="8.80" height="11.50" rx="0" fill="#d8d8d8" stroke="#8a8a8a" stroke-width="1" />
<rect x="1100.20" y="203.80" width="51.60" height="17.50" rx="4" fill="#bdbdbd" stroke="#808080" stroke-width="1.3" />
<path d="M1124.7,206.4 H1127.3 L1126.7,214.8 H1125.3 Z" fill="#505050"/>
<circle cx="1126.00" cy="217.40" r="1.1" fill="#505050" stroke="none" stroke-width="1" />
<rect x="1100.20" y="227.80" width="51.60" height="17.50" rx="4" fill="#bdbdbd" stroke="#808080" stroke-width="1.3" />
<path d="M1118.4,235.6 A6.8,6 0 0 0 1131.6,236.8" fill="none" stroke="#464646" stroke-width="2.3"/>
<path d="M1127.8,237.2 L1131.6,231.6 L1135.2,237 Z" fill="#464646"/>
<rect x="1100.20" y="251.80" width="51.60" height="17.50" rx="4" fill="#e84e4b" stroke="#bb4242" stroke-width="1.2" />
<path d="M1122.6,256.6 A5.8,5.8 0 1 0 1129.4,256.6" fill="none" stroke="#f6cdb8" stroke-width="1.9"/>
<line x1="1126" y1="253.9" x2="1126" y2="261.6" stroke="#f6cdb8" stroke-width="1.9"/>
<rect x="1101.20" y="275.20" width="49.60" height="6.60" rx="0" fill="#e0524a" stroke="#3e2020" stroke-width="1.3" />
<text x="1100.70" y="300.30" font-size="12.2" fill="#5a5a5a" font-weight="bold" text-anchor="start" textLength="18.4" lengthAdjust="spacingAndGlyphs" >Oct</text>
<use href="#plusS" x="1128.5" y="295.6"/>
<use href="#plusS" x="1143.5" y="295.6"/>
<text x="1100.70" y="319.80" font-size="12.2" fill="#5a5a5a" font-weight="bold" text-anchor="start" textLength="18.4" lengthAdjust="spacingAndGlyphs" >Acc</text>
<use href="#plusS" x="1128.5" y="315.1"/>
<use href="#plusS" x="1143.5" y="315.1"/>
<text x="1100.70" y="339.30" font-size="12.2" fill="#5a5a5a" font-weight="bold" text-anchor="start" textLength="16.4" lengthAdjust="spacingAndGlyphs" >Sld</text>
<use href="#plusS" x="1128.5" y="334.6"/>
<use href="#plusS" x="1143.5" y="334.6"/>
<text x="1100.70" y="359.50" font-size="12.2" fill="#5a5a5a" font-weight="bold" text-anchor="start" textLength="19.2" lengthAdjust="spacingAndGlyphs" >Prob</text>
<use href="#plusS" x="1128.5" y="354.8"/>
<use href="#plusS" x="1143.5" y="354.8"/>
<path d="M1123.4,375.8 v-2.2 a2.6,2.6 0 0 1 5.2,0 v0.3" fill="none" stroke="#555555" stroke-width="1.7"/>
<rect x="1121.20" y="375.50" width="9.80" height="7.00" rx="0.8" fill="#555555" stroke="none" stroke-width="1" />
<rect x="5.50" y="402.50" width="186.00" height="63.50" rx="4" fill="#2e2e2e" stroke="#140c0c" stroke-width="1" />
<text x="10.60" y="426.20" font-size="13.5" fill="#f0f0f0" font-weight="bold" text-anchor="start" textLength="25.6" lengthAdjust="spacingAndGlyphs" >Clock</text>
<rect x="42.00" y="411.00" width="48.00" height="21.00" rx="0" fill="#2a2a2a" stroke="#626262" stroke-width="1" />
<text x="65.85" y="427.30" font-size="14.5" fill="#f4f4f4" font-weight="normal" text-anchor="middle" textLength="29.3" lengthAdjust="spacingAndGlyphs" stroke="#f4f4f4" stroke-width="0.6">1/16</text>
<rect x="98.50" y="411.50" width="44.00" height="20.00" rx="3" fill="#2e2e2e" stroke="#444" stroke-width="1" />
<path d="M101.5,411.5 H112.5 V431.5 H101.5 A3,3 0 0 1 98.5,428.5 V414.5 A3,3 0 0 1 101.5,411.5 Z" fill="#e6e6e6"/>
<line x1="112.5" y1="411.5" x2="112.5" y2="431.5" stroke="#444"/><line x1="128" y1="411.5" x2="128" y2="431.5" stroke="#444"/>
<rect x="104.30" y="421.00" width="3.00" height="1.50" rx="0" fill="#333" stroke="none" stroke-width="1" />
<text x="120.30" y="426.00" font-size="11.5" fill="#8a8a8a" font-weight="bold" text-anchor="middle" textLength="6.5" lengthAdjust="spacingAndGlyphs" >T</text>
<text x="135.70" y="426.00" font-size="11.5" fill="#8a8a8a" font-weight="bold" text-anchor="middle" textLength="7" lengthAdjust="spacingAndGlyphs" >D</text>
<rect x="150.50" y="411.00" width="35.50" height="21.00" rx="0" fill="#2a2a2a" stroke="#6a6a6a" stroke-width="1" />
<text x="166.25" y="426.20" font-size="13" fill="#f0f0f0" font-weight="bold" text-anchor="middle" textLength="19.1" lengthAdjust="spacingAndGlyphs" >CH1</text>
<path d="M182.5,418 l1,-1.5 l1,1.5 M182.5,425 l1,1.5 l1,-1.5" stroke="#777" stroke-width="0.8" fill="none"/>
<rect x="14.50" y="440.00" width="17.50" height="18.00" rx="2" fill="none" stroke="#a8a8a8" stroke-width="1.4" />
<text x="37.90" y="453.50" font-size="11.5" fill="#e8e8e8" font-weight="bold" text-anchor="start" textLength="40.9" lengthAdjust="spacingAndGlyphs" >Start Sync</text>
<rect x="84.00" y="440.00" width="47.00" height="18.50" rx="3" fill="none" stroke="#444" stroke-width="1" />
<text x="107.80" y="453.50" font-size="11.5" fill="#8a8a8a" font-weight="bold" text-anchor="middle" textLength="36.4" lengthAdjust="spacingAndGlyphs" >Re-Start</text>
<rect x="137.50" y="440.00" width="48.00" height="18.50" rx="3" fill="none" stroke="#444" stroke-width="1" />
<text x="161.85" y="453.50" font-size="11.5" fill="#8a8a8a" font-weight="bold" text-anchor="middle" textLength="36.3" lengthAdjust="spacingAndGlyphs" >Re-Sync</text>
<rect x="204.50" y="406.50" width="49.00" height="25.50" rx="3" fill="url(#acid)" stroke="#6a3030" stroke-width="1" />
<text x="229.00" y="423.80" font-size="12.6" fill="#111" font-weight="bold" text-anchor="middle" textLength="29.2" lengthAdjust="spacingAndGlyphs" >ACID</text>
<rect x="259.50" y="406.50" width="49.00" height="25.50" rx="3" fill="url(#gbtn)" stroke="#6a3030" stroke-width="1" />
<text x="284.00" y="423.80" font-size="12.6" fill="#dcdcdc" font-weight="bold" text-anchor="middle" textLength="33.8" lengthAdjust="spacingAndGlyphs" >DARK</text>
<rect x="314.50" y="406.50" width="49.00" height="25.50" rx="3" fill="url(#gbtn)" stroke="#6a3030" stroke-width="1" />
<text x="339.00" y="423.80" font-size="12.6" fill="#dcdcdc" font-weight="bold" text-anchor="middle" textLength="39.2" lengthAdjust="spacingAndGlyphs" >M5816</text>
<rect x="204.50" y="438.50" width="49.00" height="25.50" rx="3" fill="url(#gbtn)" stroke="#6a3030" stroke-width="1" />
<text x="229.00" y="455.80" font-size="12.6" fill="#dcdcdc" font-weight="bold" text-anchor="middle" textLength="43" lengthAdjust="spacingAndGlyphs" >STEP16</text>
<rect x="259.50" y="438.50" width="49.00" height="25.50" rx="3" fill="url(#gbtn)" stroke="#6a3030" stroke-width="1" />
<text x="284.00" y="455.80" font-size="12.6" fill="#dcdcdc" font-weight="bold" text-anchor="middle" textLength="33.5" lengthAdjust="spacingAndGlyphs" >HEXA</text>
<rect x="314.50" y="438.50" width="49.00" height="25.50" rx="3" fill="url(#gbtn)" stroke="#6a3030" stroke-width="1" />
<text x="339.00" y="455.80" font-size="12.6" fill="#dcdcdc" font-weight="bold" text-anchor="middle" textLength="44.5" lengthAdjust="spacingAndGlyphs" >EUCLID</text>
<rect x="373.00" y="403.00" width="792.50" height="63.00" rx="4" fill="#2e2e2e" stroke="#2a1414" stroke-width="1" />
<line x1="438.5" y1="408.5" x2="438.5" y2="460" stroke="#4a4a4a" stroke-width="1"/>
<path d="M380.7,422 h4 l3,-9.5 l3,15.5 l3,-10.5 l2,4 l2,-3.5 l1.2,3 h2.2" fill="none" stroke="#5e5e5e" stroke-width="1.6" stroke-linejoin="round"/>
<path d="M407.5,416.5 h5 l2,-3 h6 l2,3 h4 v12 h-19 Z" fill="none" stroke="#f0f0f0" stroke-width="1.8" stroke-linejoin="round"/>
<circle cx="417.00" cy="421.80" r="3.6" fill="none" stroke="#f0f0f0" stroke-width="1.6" />
<circle cx="417.00" cy="421.80" r="1.3" fill="#f0f0f0" stroke="none" stroke-width="1" />
<circle cx="390.50" cy="448.50" r="8" fill="none" stroke="#5c5c5c" stroke-width="1.6" />
<path d="M390.5,448.5 v-5.5 a5.5,5.5 0 1 1 -5.2,3.8 Z" fill="#5c5c5c"/>
<rect x="389.50" y="437.50" width="2.00" height="3.00" rx="0" fill="#5c5c5c" stroke="none" stroke-width="1" />
<rect x="407.50" y="440.50" width="19.50" height="15.00" rx="0" fill="none" stroke="#555" stroke-width="1.3" />
<line x1="411.4" y1="440.5" x2="411.4" y2="455.5" stroke="#555" stroke-width="0.8"/>
<line x1="415.3" y1="440.5" x2="415.3" y2="455.5" stroke="#555" stroke-width="0.8"/>
<line x1="419.2" y1="440.5" x2="419.2" y2="455.5" stroke="#555" stroke-width="0.8"/>
<line x1="423.1" y1="440.5" x2="423.1" y2="455.5" stroke="#555" stroke-width="0.8"/>
<rect x="410.23" y="440.50" width="2.34" height="9.00" rx="0" fill="#555" stroke="none" stroke-width="1" />
<rect x="414.13" y="440.50" width="2.34" height="9.00" rx="0" fill="#555" stroke="none" stroke-width="1" />
<rect x="418.03" y="440.50" width="2.34" height="9.00" rx="0" fill="#555" stroke="none" stroke-width="1" />
<rect x="421.93" y="440.50" width="2.34" height="9.00" rx="0" fill="#555" stroke="none" stroke-width="1" />
<rect x="592.00" y="410.50" width="15.50" height="13.50" rx="0" fill="none" stroke="#555" stroke-width="1.3" />
<line x1="595.1" y1="410.5" x2="595.1" y2="424.0" stroke="#555" stroke-width="0.8"/>
<line x1="598.2" y1="410.5" x2="598.2" y2="424.0" stroke="#555" stroke-width="0.8"/>
<line x1="601.3" y1="410.5" x2="601.3" y2="424.0" stroke="#555" stroke-width="0.8"/>
<line x1="604.4" y1="410.5" x2="604.4" y2="424.0" stroke="#555" stroke-width="0.8"/>
<rect x="594.17" y="410.50" width="1.86" height="8.10" rx="0" fill="#555" stroke="none" stroke-width="1" />
<rect x="597.27" y="410.50" width="1.86" height="8.10" rx="0" fill="#555" stroke="none" stroke-width="1" />
<rect x="600.37" y="410.50" width="1.86" height="8.10" rx="0" fill="#555" stroke="none" stroke-width="1" />
<rect x="603.47" y="410.50" width="1.86" height="8.10" rx="0" fill="#555" stroke="none" stroke-width="1" />
<text x="458.70" y="421.50" font-size="12.5" fill="#a4a4a4" font-weight="normal" text-anchor="start" textLength="99.7" lengthAdjust="spacingAndGlyphs" stroke="#a4a4a4" stroke-width="0.5">Pattern Snapshot</text>
<rect x="453.50" y="433.00" width="239.00" height="26.00" rx="3" fill="none" stroke="#444" stroke-width="1" />
<path d="M456.5,433 H473 V459 H456.5 A3,3 0 0 1 453.5,456 V436 A3,3 0 0 1 456.5,433 Z" fill="#e6e6e6"/>
<line x1="473.4" y1="433" x2="473.4" y2="459" stroke="#444" stroke-width="1"/>
<line x1="493.3" y1="433" x2="493.3" y2="459" stroke="#444" stroke-width="1"/>
<line x1="513.2" y1="433" x2="513.2" y2="459" stroke="#444" stroke-width="1"/>
<line x1="533.1" y1="433" x2="533.1" y2="459" stroke="#444" stroke-width="1"/>
<line x1="553.0" y1="433" x2="553.0" y2="459" stroke="#444" stroke-width="1"/>
<line x1="572.9" y1="433" x2="572.9" y2="459" stroke="#444" stroke-width="1"/>
<line x1="592.8" y1="433" x2="592.8" y2="459" stroke="#444" stroke-width="1"/>
<line x1="612.7" y1="433" x2="612.7" y2="459" stroke="#444" stroke-width="1"/>
<line x1="632.6" y1="433" x2="632.6" y2="459" stroke="#444" stroke-width="1"/>
<line x1="652.5" y1="433" x2="652.5" y2="459" stroke="#444" stroke-width="1"/>
<line x1="672.4" y1="433" x2="672.4" y2="459" stroke="#444" stroke-width="1"/>
<text x="463.45" y="451.50" font-size="13" fill="#111" font-weight="bold" text-anchor="middle" textLength="7.5" lengthAdjust="spacingAndGlyphs" >1</text>
<text x="483.35" y="451.50" font-size="13" fill="#9e9e9e" font-weight="bold" text-anchor="middle" textLength="7.5" lengthAdjust="spacingAndGlyphs" >2</text>
<text x="503.25" y="451.50" font-size="13" fill="#9e9e9e" font-weight="bold" text-anchor="middle" textLength="7.5" lengthAdjust="spacingAndGlyphs" >3</text>
<text x="523.15" y="451.50" font-size="13" fill="#9e9e9e" font-weight="bold" text-anchor="middle" textLength="7.5" lengthAdjust="spacingAndGlyphs" >4</text>
<text x="543.05" y="451.50" font-size="13" fill="#9e9e9e" font-weight="bold" text-anchor="middle" textLength="7.5" lengthAdjust="spacingAndGlyphs" >5</text>
<text x="562.95" y="451.50" font-size="13" fill="#9e9e9e" font-weight="bold" text-anchor="middle" textLength="7.5" lengthAdjust="spacingAndGlyphs" >6</text>
<text x="582.85" y="451.50" font-size="13" fill="#9e9e9e" font-weight="bold" text-anchor="middle" textLength="7.5" lengthAdjust="spacingAndGlyphs" >7</text>
<text x="602.75" y="451.50" font-size="13" fill="#9e9e9e" font-weight="bold" text-anchor="middle" textLength="7.5" lengthAdjust="spacingAndGlyphs" >8</text>
<text x="622.65" y="451.50" font-size="13" fill="#9e9e9e" font-weight="bold" text-anchor="middle" textLength="7.5" lengthAdjust="spacingAndGlyphs" >9</text>
<text x="642.55" y="451.50" font-size="13" fill="#9e9e9e" font-weight="bold" text-anchor="middle" textLength="15.3" lengthAdjust="spacingAndGlyphs" >10</text>
<text x="662.45" y="451.50" font-size="13" fill="#9e9e9e" font-weight="bold" text-anchor="middle" textLength="15.3" lengthAdjust="spacingAndGlyphs" >11</text>
<text x="682.35" y="451.50" font-size="13" fill="#9e9e9e" font-weight="bold" text-anchor="middle" textLength="15.3" lengthAdjust="spacingAndGlyphs" >12</text>
<path d="M716.5,414.5 A6.5,6.5 0 1 0 723.5,414.5" fill="none" stroke="#5c5c5c" stroke-width="1.8"/>
<line x1="720" y1="411.5" x2="720" y2="419.5" stroke="#5c5c5c" stroke-width="1.8"/>
<text x="743.00" y="423.80" font-size="12.5" fill="#a4a4a4" font-weight="normal" text-anchor="start" textLength="85.3" lengthAdjust="spacingAndGlyphs" stroke="#a4a4a4" stroke-width="0.5">Snapshot Chainer</text>
<text x="859.50" y="423.80" font-size="12.5" fill="#b0b0b0" font-weight="normal" text-anchor="start" textLength="52.4" lengthAdjust="spacingAndGlyphs" stroke="#b0b0b0" stroke-width="0.5">Step Size</text>
<rect x="921.50" y="410.50" width="45.00" height="18.00" rx="0" fill="none" stroke="#c0c0c0" stroke-width="1.5" />
<text x="943.70" y="424.60" font-size="12.5" fill="#f0f0f0" font-weight="bold" text-anchor="middle" >4</text>
<text x="982.10" y="423.80" font-size="12.5" fill="#b0b0b0" font-weight="normal" text-anchor="start" textLength="81.3" lengthAdjust="spacingAndGlyphs" stroke="#b0b0b0" stroke-width="0.5">Step Inc Every</text>
<rect x="1078.50" y="410.50" width="65.50" height="18.00" rx="0" fill="none" stroke="#c0c0c0" stroke-width="1.5" />
<text x="1111.00" y="424.60" font-size="12.5" fill="#f0f0f0" font-weight="bold" text-anchor="middle" textLength="40" lengthAdjust="spacingAndGlyphs" >16 step</text>
<line x1="705" y1="431.9" x2="1160" y2="431.9" stroke="#272727" stroke-width="1.5"/>
<path d="M708.50,435.5 H730.50 L735.00,447.0 L730.50,458.5 H708.50 Z" fill="none" stroke="#a0a0a0" stroke-width="1.4"/>
<text x="719.70" y="452.60" font-size="14.5" fill="#f4f4f4" font-weight="bold" text-anchor="middle" >1</text>
<path d="M736.55,435.5 H758.55 L763.05,447.0 L758.55,458.5 H736.55 Z" fill="none" stroke="#a0a0a0" stroke-width="1.4"/>
<text x="747.75" y="452.60" font-size="14.5" fill="#f4f4f4" font-weight="bold" text-anchor="middle" >1</text>
<path d="M764.60,435.5 H786.60 L791.10,447.0 L786.60,458.5 H764.60 Z" fill="none" stroke="#a0a0a0" stroke-width="1.4"/>
<text x="775.80" y="452.60" font-size="14.5" fill="#f4f4f4" font-weight="bold" text-anchor="middle" >1</text>
<path d="M792.65,435.5 H814.65 L819.15,447.0 L814.65,458.5 H792.65 Z" fill="none" stroke="#a0a0a0" stroke-width="1.4"/>
<text x="803.85" y="452.60" font-size="14.5" fill="#f4f4f4" font-weight="bold" text-anchor="middle" >1</text>
<path d="M820.70,435.5 H842.70 L847.20,447.0 L842.70,458.5 H820.70 Z" fill="none" stroke="#262626" stroke-width="1.2"/>
<path d="M848.75,435.5 H870.75 L875.25,447.0 L870.75,458.5 H848.75 Z" fill="none" stroke="#262626" stroke-width="1.2"/>
<path d="M876.80,435.5 H898.80 L903.30,447.0 L898.80,458.5 H876.80 Z" fill="none" stroke="#262626" stroke-width="1.2"/>
<path d="M904.85,435.5 H926.85 L931.35,447.0 L926.85,458.5 H904.85 Z" fill="none" stroke="#262626" stroke-width="1.2"/>
<path d="M932.90,435.5 H954.90 L959.40,447.0 L954.90,458.5 H932.90 Z" fill="none" stroke="#262626" stroke-width="1.2"/>
<path d="M960.95,435.5 H982.95 L987.45,447.0 L982.95,458.5 H960.95 Z" fill="none" stroke="#262626" stroke-width="1.2"/>
<path d="M989.00,435.5 H1011.00 L1015.50,447.0 L1011.00,458.5 H989.00 Z" fill="none" stroke="#262626" stroke-width="1.2"/>
<path d="M1017.05,435.5 H1039.05 L1043.55,447.0 L1039.05,458.5 H1017.05 Z" fill="none" stroke="#262626" stroke-width="1.2"/>
<path d="M1045.10,435.5 H1067.10 L1071.60,447.0 L1067.10,458.5 H1045.10 Z" fill="none" stroke="#262626" stroke-width="1.2"/>
<path d="M1073.15,435.5 H1095.15 L1099.65,447.0 L1095.15,458.5 H1073.15 Z" fill="none" stroke="#262626" stroke-width="1.2"/>
<path d="M1101.20,435.5 H1123.20 L1127.70,447.0 L1123.20,458.5 H1101.20 Z" fill="none" stroke="#262626" stroke-width="1.2"/>
<path d="M1129.25,435.5 H1151.25 L1155.75,447.0 L1151.25,458.5 H1129.25 Z" fill="none" stroke="#262626" stroke-width="1.2"/>
<line x1="1154.5" y1="480" x2="1172" y2="462.5" stroke="#f4e8e8" stroke-width="1.3"/>
<line x1="1156.3" y1="480" x2="1172" y2="464.29999999999995" stroke="#a07878" stroke-width="1.0"/>
<line x1="1158.4" y1="480" x2="1172" y2="466.4000000000001" stroke="#f4e8e8" stroke-width="1.3"/>
<line x1="1160.2" y1="480" x2="1172" y2="468.20000000000005" stroke="#6a5050" stroke-width="1.0"/>
<line x1="1162.3" y1="480" x2="1172" y2="470.29999999999995" stroke="#f4e8e8" stroke-width="1.3"/>
<line x1="1164.2" y1="480" x2="1172" y2="472.20000000000005" stroke="#9a8080" stroke-width="1.0"/>
<path d="M1172,474 L1172,480 L1166,480 Z" fill="#e8dada"/></svg></body></html>
